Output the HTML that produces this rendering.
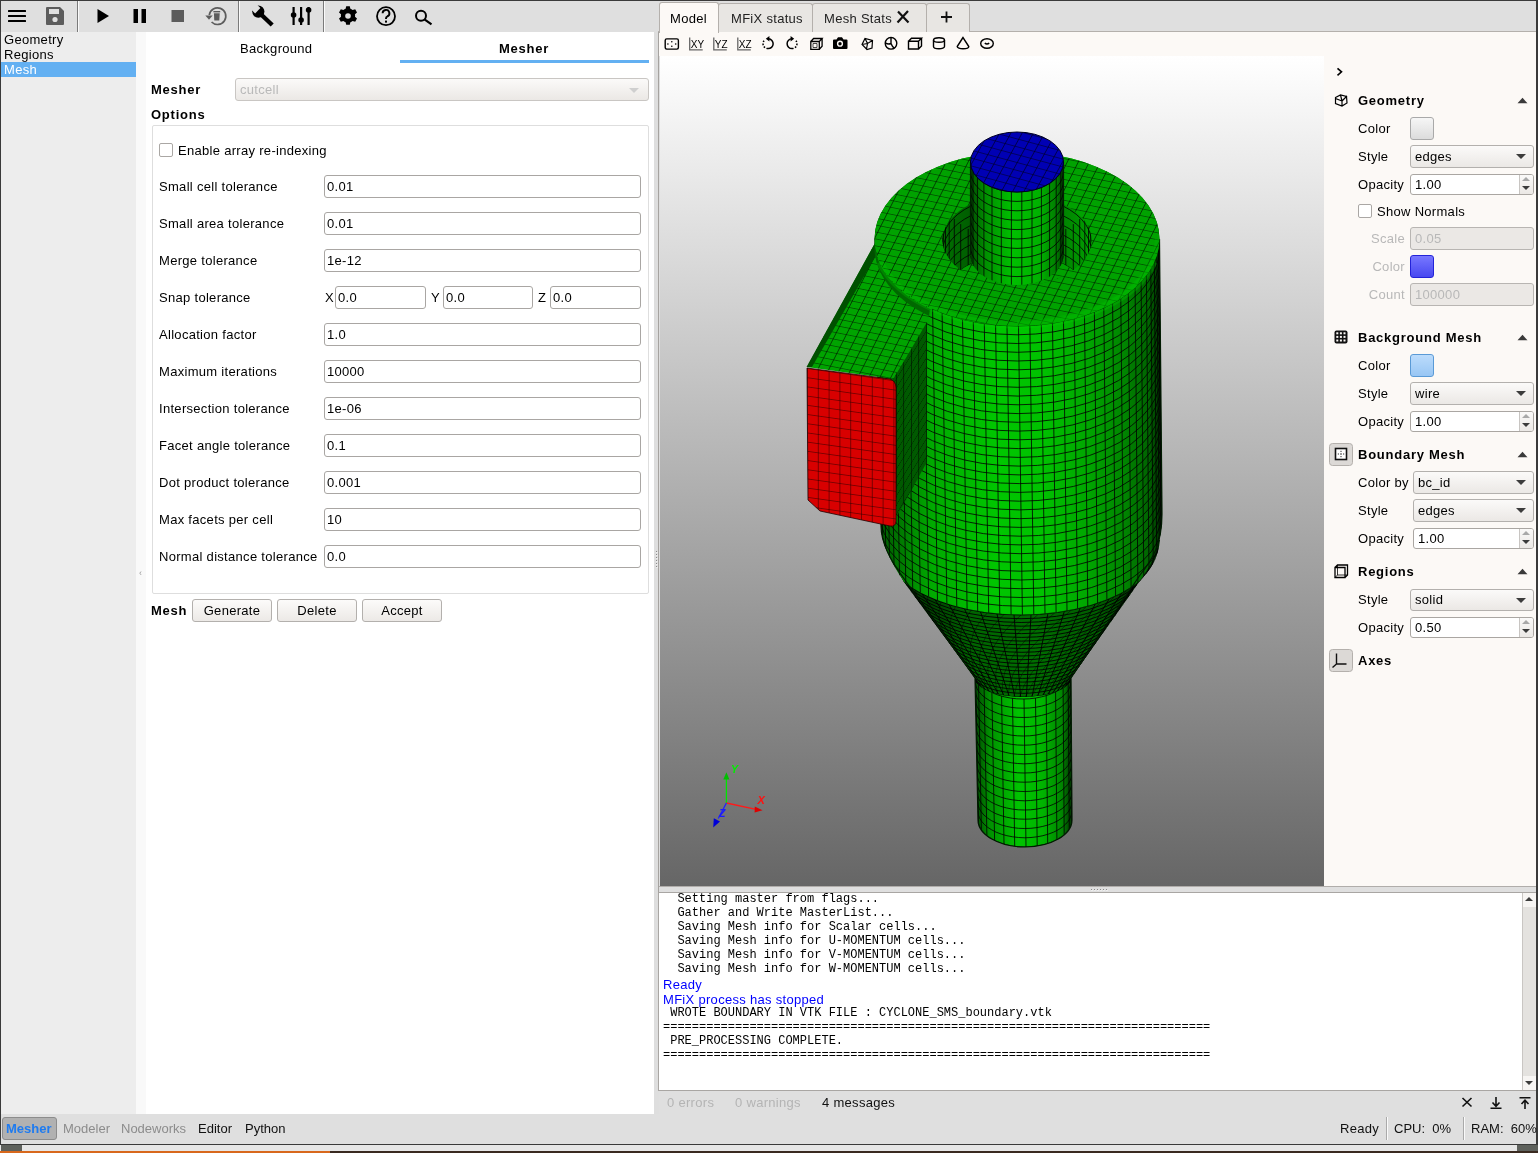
<!DOCTYPE html>
<html><head><meta charset="utf-8">
<style>
*{box-sizing:border-box;margin:0;padding:0}
html,body{width:1538px;height:1153px;overflow:hidden;background:#dedede;font-family:"Liberation Sans",sans-serif;font-size:13px;color:#000}
.a{position:absolute}
.t{position:absolute;white-space:nowrap;line-height:15px;letter-spacing:0.3px}
.t[style*="bold"],.t.b{letter-spacing:0.75px}
.ns{letter-spacing:0!important}
.b{font-weight:bold}
.inp{position:absolute;background:#fff;border:1px solid #a9a6a3;border-radius:3px}
.inp span{position:absolute;left:2px;top:3px;line-height:15px;white-space:nowrap;letter-spacing:0.3px}
.cmb{position:absolute;border:1px solid #b3b0ad;border-radius:3px;background:linear-gradient(#fbfaf9,#ebe8e5)}
.cmb span{position:absolute;left:8px;top:3px;line-height:15px;white-space:nowrap;letter-spacing:0.3px}
.cmb i{position:absolute;right:9px;top:9px;width:0;height:0;border-left:5px solid transparent;border-right:5px solid transparent;border-top:5px solid #3c3c3c}
.btn{position:absolute;border:1px solid #b3b0ad;border-radius:3px;background:linear-gradient(#fcfbfa,#ece9e6);text-align:center;line-height:22px;letter-spacing:0.3px}
.mono{font-family:"Liberation Mono",monospace;font-size:12px;line-height:14px;letter-spacing:0}
</style></head><body><div id="wrap" style="position:absolute;left:0;top:0;width:1538px;height:1153px;will-change:transform">
<!-- window border -->
<div class="a" style="left:0;top:0;width:1538px;height:1px;background:#3a3a3a"></div>
<div class="a" style="left:0;top:0;width:1px;height:1145px;background:#3a3a3a"></div>
<div class="a" style="left:1536px;top:0;width:2px;height:1145px;background:#3a3a3a"></div>
<div class="a" style="left:0;top:1144px;width:1538px;height:1px;background:#3a3a3a"></div>
<div class="a" style="left:0;top:1145px;width:1538px;height:6px;background:#e6e6e6"></div>
<div class="a" style="left:1px;top:1145px;width:21px;height:6px;background:#5e615c"></div>
<div class="a" style="left:1517px;top:1145px;width:21px;height:6px;background:#5e615c"></div>
<div class="a" style="left:0;top:1151px;width:1538px;height:2px;background:#3a2a20"></div>
<div class="a" style="left:0;top:1151px;width:330px;height:2px;background:#d8681c"></div>

<!-- LEFT TOOLBAR -->
<div class="a" style="left:1px;top:1px;width:657px;height:31px;background:#dfdfdf"></div>
<div class="a" style="left:77px;top:1px;width:1px;height:31px;background:#7a7a7a"></div>
<div class="a" style="left:78px;top:1px;width:1px;height:31px;background:#fafafa"></div>
<div class="a" style="left:238px;top:1px;width:1px;height:31px;background:#7a7a7a"></div>
<div class="a" style="left:239px;top:1px;width:1px;height:31px;background:#fafafa"></div>
<div class="a" style="left:323px;top:1px;width:1px;height:31px;background:#7a7a7a"></div>
<div class="a" style="left:324px;top:1px;width:1px;height:31px;background:#fafafa"></div>
<svg class="a" style="left:0;top:0" width="460" height="32" viewBox="0 0 460 32">
 <!-- hamburger -->
 <g fill="#000"><rect x="8" y="10" width="18" height="2" rx="0.5"/><rect x="8" y="15" width="18" height="2" rx="0.5"/><rect x="8" y="20" width="18" height="2" rx="0.5"/></g>
 <!-- save -->
 <path fill="#5c5c5c" d="M47 7h13l4 4v13a1 1 0 0 1-1 1H47a1 1 0 0 1-1-1V8a1 1 0 0 1 1-1z"/>
 <rect x="49" y="9" width="10" height="5" fill="#dfdfdf"/>
 <circle cx="55" cy="19.5" r="2.6" fill="#dfdfdf"/>
 <!-- play -->
 <path fill="#000" d="M97.5 9L109 16L97.5 23z"/>
 <!-- pause -->
 <rect x="133.5" y="9" width="4.5" height="14" fill="#000"/><rect x="141.5" y="9" width="4.5" height="14" fill="#000"/>
 <!-- stop -->
 <rect x="171.5" y="10" width="12.5" height="12" fill="#5c5c5c"/>
 <!-- reset/trash -->
 <path fill="none" stroke="#5c5c5c" stroke-width="1.7" d="M209.3 15A8.3 8.3 0 1 1 211.6 22"/>
 <path fill="#5c5c5c" d="M205.3 15.6h7.4l-3.7 4.2z"/>
 <rect x="213.4" y="11" width="6.8" height="1.4" fill="#5c5c5c"/>
 <path fill="#5c5c5c" d="M213.9 13.2h5.8l-0.4 7.3h-5z"/>
 <!-- wrench -->
 <circle cx="258.3" cy="11.6" r="6.1" fill="#000"/><path d="M259 12.5L272.2 25" stroke="#000" stroke-width="4.4"/><path d="M250.3 8.6L255.6 3.3L260.4 8.1L255.1 13.4z" fill="#dfdfdf"/>
 <!-- sliders -->
 <g fill="#000"><rect x="292.5" y="7" width="2.2" height="18"/><rect x="300" y="7" width="2.2" height="18"/><rect x="307.5" y="7" width="2.2" height="18"/>
 <circle cx="293.6" cy="15" r="2.8"/><circle cx="301.1" cy="20" r="2.8"/><circle cx="308.6" cy="10" r="2.8"/></g>
 <!-- gear -->
 <g transform="translate(348,16)"><path fill="#000" d="M-1.8-9.8h3.6l0.6 2.6a7 7 0 0 1 2.2 1.3l2.6-0.8 1.8 3.1-2 1.8a7 7 0 0 1 0 2.6l2 1.8-1.8 3.1-2.6-0.8a7 7 0 0 1-2.2 1.3l-0.6 2.6h-3.6l-0.6-2.6a7 7 0 0 1-2.2-1.3l-2.6 0.8-1.8-3.1 2-1.8a7 7 0 0 1 0-2.6l-2-1.8 1.8-3.1 2.6 0.8a7 7 0 0 1 2.2-1.3z"/><circle r="2.8" fill="#dfdfdf"/></g>
 <!-- help -->
 <circle cx="386" cy="16.2" r="9" fill="none" stroke="#000" stroke-width="1.8"/>
 <path fill="none" stroke="#000" stroke-width="1.9" d="M382.6 13.3a3.4 3.4 0 1 1 4.6 3.2c-0.9 0.4-1.2 1-1.2 2v0.6"/>
 <rect x="385" y="20.6" width="2" height="2" fill="#000"/>
 <!-- search -->
 <circle cx="421" cy="15.8" r="5" fill="none" stroke="#000" stroke-width="2"/>
 <path stroke="#000" stroke-width="2.2" d="M424.5 19.3L431.5 24.3"/>
</svg>


<!-- TREE -->
<div class="a" style="left:1px;top:32px;width:135px;height:1082px;background:#ededed"></div>
<div class="a" style="left:1px;top:62px;width:135px;height:15px;background:#63b0f2"></div>
<div class="t" style="left:4px;top:32px">Geometry</div>
<div class="t" style="left:4px;top:47px">Regions</div>
<div class="t" style="left:4px;top:62px;color:#fff">Mesh</div>
<div class="a" style="left:136px;top:32px;width:10px;height:1082px;background:#f9f9f9"></div>
<div class="a" style="left:146px;top:32px;width:508px;height:1082px;background:#fff"></div>
<div class="a" style="left:654px;top:32px;width:4px;height:1082px;background:#dedede"></div>

<div class="t" style="left:240px;top:41px">Background</div>
<div class="t b" style="left:499px;top:41px">Mesher</div>
<div class="a" style="left:400px;top:60px;width:249px;height:3px;background:#63b0f2"></div>
<div class="t b" style="left:151px;top:82px">Mesher</div>
<div class="cmb" style="left:235px;top:78px;width:414px;height:23px;border-color:#c9c6c3"><span style="left:4px;color:#b9b9b9">cutcell</span><i style="border-top-color:#cfcfcf"></i></div>
<div class="t b" style="left:151px;top:107px">Options</div>
<div class="a" style="left:152px;top:125px;width:497px;height:469px;border:1px solid #dedede;border-radius:2px"></div>
<div class="a" style="left:159px;top:143px;width:14px;height:14px;border:1px solid #aaa7a4;border-radius:2px;background:#fff"></div>
<div class="t" style="left:178px;top:143px">Enable array re-indexing</div>
<div class="t" style="left:159px;top:179px">Small cell tolerance</div>
<div class="inp" style="left:324px;top:175px;width:317px;height:23px"><span>0.01</span></div>
<div class="t" style="left:159px;top:216px">Small area tolerance</div>
<div class="inp" style="left:324px;top:212px;width:317px;height:23px"><span>0.01</span></div>
<div class="t" style="left:159px;top:253px">Merge tolerance</div>
<div class="inp" style="left:324px;top:249px;width:317px;height:23px"><span>1e-12</span></div>
<div class="t" style="left:159px;top:290px">Snap tolerance</div>
<div class="t" style="left:325px;top:290px">X</div>
<div class="inp" style="left:335px;top:286px;width:91px;height:23px"><span>0.0</span></div>
<div class="t" style="left:431px;top:290px">Y</div>
<div class="inp" style="left:443px;top:286px;width:90px;height:23px"><span>0.0</span></div>
<div class="t" style="left:538px;top:290px">Z</div>
<div class="inp" style="left:550px;top:286px;width:91px;height:23px"><span>0.0</span></div>
<div class="t" style="left:159px;top:327px">Allocation factor</div>
<div class="inp" style="left:324px;top:323px;width:317px;height:23px"><span>1.0</span></div>
<div class="t" style="left:159px;top:364px">Maximum iterations</div>
<div class="inp" style="left:324px;top:360px;width:317px;height:23px"><span>10000</span></div>
<div class="t" style="left:159px;top:401px">Intersection tolerance</div>
<div class="inp" style="left:324px;top:397px;width:317px;height:23px"><span>1e-06</span></div>
<div class="t" style="left:159px;top:438px">Facet angle tolerance</div>
<div class="inp" style="left:324px;top:434px;width:317px;height:23px"><span>0.1</span></div>
<div class="t" style="left:159px;top:475px">Dot product tolerance</div>
<div class="inp" style="left:324px;top:471px;width:317px;height:23px"><span>0.001</span></div>
<div class="t" style="left:159px;top:512px">Max facets per cell</div>
<div class="inp" style="left:324px;top:508px;width:317px;height:23px"><span>10</span></div>
<div class="t" style="left:159px;top:549px">Normal distance tolerance</div>
<div class="inp" style="left:324px;top:545px;width:317px;height:23px"><span>0.0</span></div>
<div class="t b" style="left:151px;top:603px">Mesh</div>
<div class="btn" style="left:192px;top:599px;width:80px;height:23px">Generate</div>
<div class="btn" style="left:277px;top:599px;width:80px;height:23px">Delete</div>
<div class="btn" style="left:362px;top:599px;width:80px;height:23px">Accept</div>
<div class="a" style="left:139px;top:569px;font-size:9px;color:#9a9a9a;line-height:9px">&#8249;</div>

<!-- tab bar -->
<div class="a" style="left:658px;top:1px;width:878px;height:31px;background:#dfdfdf"></div>
<div class="a" style="left:658px;top:31px;width:878px;height:1px;background:#b4b0ac"></div>
<div class="a" style="left:658px;top:32px;width:878px;height:24px;background:#fcf9f6"></div>
<div class="a" style="left:658px;top:32px;width:1px;height:1059px;background:#a6a3a0"></div>
<div class="a" style="left:718px;top:3px;width:95px;height:29px;background:#e8e6e3;border:1px solid #b4b0ac;border-bottom:none;border-radius:3px 3px 0 0"></div>
<div class="a" style="left:812px;top:3px;width:115px;height:29px;background:#e8e6e3;border:1px solid #b4b0ac;border-bottom:none;border-radius:3px 3px 0 0"></div>
<div class="a" style="left:926px;top:3px;width:44px;height:29px;background:#e8e6e3;border:1px solid #b4b0ac;border-bottom:none;border-radius:3px 3px 0 0"></div>
<div class="a" style="left:659px;top:2px;width:60px;height:31px;background:#fcf9f6;border:1px solid #b4b0ac;border-bottom:none;border-radius:3px 3px 0 0"></div>
<div class="t" style="left:670px;top:11px">Model</div>
<div class="t" style="left:731px;top:11px;color:#222">MFiX status</div>
<div class="t" style="left:824px;top:11px;color:#222">Mesh Stats</div>
<svg class="a" style="left:890px;top:8px" width="80" height="20" viewBox="890 8 80 20">
 <path d="M898 11.5L908.5 22.5M908 11L897.5 22.5" stroke="#111" stroke-width="2.2" fill="none"/>
 <path d="M941 17h11M946.5 11.5v11" stroke="#111" stroke-width="1.8"/>
</svg>
<!-- 3D toolbar icons -->
<svg class="a" style="left:658px;top:32px" width="350" height="24" viewBox="658 32 350 24">
 <g fill="none" stroke="#000" stroke-width="1.4">
  <rect x="665.2" y="38.9" width="13.2" height="10.2" rx="1.5"/>
 </g>
 <g fill="#000"><circle cx="671.8" cy="41.8" r="0.8"/><circle cx="671.8" cy="46.3" r="0.8"/><circle cx="667.9" cy="44" r="0.8"/><circle cx="675.7" cy="44" r="0.8"/></g>
 <g fill="none" stroke="#666" stroke-width="1.3"><path d="M689.7 37.5v12.3h13"/><path d="M713.8 37.5v12.3h13"/><path d="M737.8 37.5v12.3h13"/></g>
 <g font-family="Liberation Sans" font-size="10" fill="#000"><text x="690.8" y="47.6">XY</text><text x="714.8" y="47.6">YZ</text><text x="738.8" y="47.6">XZ</text></g>
 <g fill="none" stroke="#000" stroke-width="1.5"><path d="M768.5 38.8A4.9 4.9 0 0 1 768 48.6"/><path d="M792 38.8A4.9 4.9 0 0 0 792 48.6"/></g>
 <g fill="none" stroke="#000" stroke-width="1.5" stroke-dasharray="1.6 1.5"><path d="M768 48.6A4.9 4.9 0 0 1 764.2 40.5"/><path d="M792 48.6A4.9 4.9 0 0 0 795.8 40.5"/></g>
 <path d="M765.8 38.8l3.6-2.8v5.6z M794.2 38.8l-3.6-2.8v5.6z" fill="#000"/>
 <g fill="none" stroke="#000" stroke-width="1.3"><path d="M810.8 41.5h8.5v7.8h-8.5z M810.8 41.5l2.8-3h8.5l-2.8 3 M822.1 38.5v7.8l-2.8 3"/><path d="M813 43.5h4v4h-4z" stroke-width="0.7"/></g>
 <path d="M836.5 39.5l1.5-2.2h4l1.5 2.2h3a1 1 0 0 1 1 1v7.5a1 1 0 0 1-1 1h-12.5a1 1 0 0 1-1-1V40.5a1 1 0 0 1 1-1z" fill="#000"/>
 <circle cx="840" cy="43.7" r="2.4" fill="none" stroke="#fcf9f6" stroke-width="1.4"/>
 <g fill="none" stroke="#000" stroke-width="1.2"><path d="M862 44.5l3-6 7.5 2-0.5 7.5-5 1.5z M865 38.5l2.5 5 5-3 M867.5 43.5l-1 5.5 M862 44.5l5.5-1"/></g>
 <g fill="none" stroke="#000" stroke-width="1.4"><circle cx="891" cy="43.3" r="5.8"/><path d="M891 37.5V43.5 M885.3 42.8Q888.3 44.8 891 43.5Q892.2 46.8 894.5 48.3"/></g>
 <g fill="none" stroke="#000" stroke-width="1.4"><path d="M908.5 41.2h10v7.8h-10z M908.5 41.2l3-3h10l-3 3 M921.5 38.2v7.8l-3 3"/></g>
 <g fill="none" stroke="#000" stroke-width="1.4"><ellipse cx="939" cy="40" rx="5.5" ry="2.3"/><path d="M933.5 40v6.5a5.5 2.3 0 0 0 11 0V40"/></g>
 <g fill="none" stroke="#000" stroke-width="1.4"><path d="M963 37.5l-5.8 9a5.8 2.2 0 0 0 11.6 0z"/></g>
 <g fill="none" stroke="#000" stroke-width="1.4"><ellipse cx="987" cy="43.5" rx="6.3" ry="4.8"/><path d="M984.8 43.2q2.2 1.6 4.4 0" stroke-width="1.6"/></g>
</svg>

<!--VIEW--><svg class="a" style="left:660px;top:56px" width="664" height="830" viewBox="660 56 664 830">
<defs>
<linearGradient id="bg" x1="0" y1="0" x2="0" y2="1"><stop offset="0" stop-color="#ffffff"/><stop offset="1" stop-color="#666666"/></linearGradient>
<linearGradient id="gBody" gradientUnits="userSpaceOnUse" x1="874" y1="0" x2="1163" y2="0">
 <stop offset="0" stop-color="#005000"/><stop offset="0.08" stop-color="#007400"/><stop offset="0.2" stop-color="#00aa00"/><stop offset="0.42" stop-color="#00c600"/><stop offset="0.58" stop-color="#00c200"/><stop offset="0.74" stop-color="#00a600"/><stop offset="0.87" stop-color="#008400"/><stop offset="0.95" stop-color="#006400"/><stop offset="1" stop-color="#002a00"/></linearGradient>
<linearGradient id="gTube" gradientUnits="userSpaceOnUse" x1="975" y1="0" x2="1072" y2="0">
 <stop offset="0" stop-color="#004800"/><stop offset="0.15" stop-color="#009000"/><stop offset="0.45" stop-color="#00c400"/><stop offset="0.7" stop-color="#00b400"/><stop offset="0.9" stop-color="#008400"/><stop offset="1" stop-color="#003000"/></linearGradient>
<linearGradient id="gOut" gradientUnits="userSpaceOnUse" x1="970" y1="0" x2="1064" y2="0">
 <stop offset="0" stop-color="#004a00"/><stop offset="0.15" stop-color="#008c00"/><stop offset="0.45" stop-color="#00c000"/><stop offset="0.75" stop-color="#00b000"/><stop offset="0.92" stop-color="#007c00"/><stop offset="1" stop-color="#003800"/></linearGradient>
<linearGradient id="gCone" gradientUnits="userSpaceOnUse" x1="900" y1="0" x2="1145" y2="0">
 <stop offset="0" stop-color="#002c00"/><stop offset="0.3" stop-color="#006400"/><stop offset="0.55" stop-color="#006e00"/><stop offset="0.85" stop-color="#005800"/><stop offset="1" stop-color="#002400"/></linearGradient>
<linearGradient id="gHole" gradientUnits="userSpaceOnUse" x1="942" y1="0" x2="1092" y2="0">
 <stop offset="0" stop-color="#007000"/><stop offset="0.2" stop-color="#005c00"/><stop offset="0.75" stop-color="#007c00"/><stop offset="1" stop-color="#00a000"/></linearGradient>
<pattern id="pTop" patternUnits="userSpaceOnUse" width="10.5" height="10.5" patternTransform="translate(1017 239) scale(1 0.63) rotate(17.6)">
 <path d="M0 0H10.5M0 0V10.5" stroke="#000" stroke-width="1.25" stroke-opacity="0.9" fill="none"/></pattern>
<pattern id="pBlue" patternUnits="userSpaceOnUse" width="10.5" height="10.5" patternTransform="translate(1017 162) scale(1 0.7) rotate(21)">
 <path d="M0 0H10.5M0 0V10.5" stroke="#000" stroke-width="1.2" stroke-opacity="0.9" fill="none"/></pattern>
<pattern id="pRed" patternUnits="userSpaceOnUse" width="10.8" height="9.2" patternTransform="translate(807 368) skewY(8)">
 <path d="M0 0H10.8M0 0V9.2" stroke="#000" stroke-width="1" stroke-opacity="0.85" fill="none"/></pattern>
<pattern id="pInTop" patternUnits="userSpaceOnUse" width="10.5" height="10.5" patternTransform="translate(807 368) scale(1 0.63) rotate(17.6)">
 <path d="M0 0H10.5M0 0V10.5" stroke="#000" stroke-width="1.25" stroke-opacity="0.9" fill="none"/></pattern>
<pattern id="pInR" patternUnits="userSpaceOnUse" width="7.5" height="9" patternTransform="translate(896 388) skewY(-58)">
 <path d="M0 0H7.5M0 0V9" stroke="#000" stroke-width="1.1" stroke-opacity="0.9" fill="none"/></pattern>
</defs>
<rect x="660" y="56" width="664" height="830" fill="url(#bg)"/>
<path d="M975 670 L1071 670 L1072 820 A47 27 0 0 1 978 820 Z" fill="url(#gTube)"/>
<clipPath id="cTube"><path d="M975 670 L1071 670 L1072 820 A47 27 0 0 1 978 820 Z"/></clipPath>
<g clip-path="url(#cTube)"><path d="M1071.0 672.0 L1070.6 675.5 L1069.4 679.0 L1067.3 682.3 L1064.6 685.5 L1061.1 688.4 L1056.9 691.1 L1052.2 693.4 L1047.0 695.4 L1041.4 696.9 L1035.4 698.1 L1029.3 698.8 L1023.0 699.0 L1016.7 698.8 L1010.6 698.1 L1004.6 696.9 L999.0 695.4 L993.8 693.4 L989.1 691.1 L984.9 688.4 L981.4 685.5 L978.7 682.3 L976.6 679.0 L975.4 675.5 L975.0 672.0 M1071.1 681.2 L1070.7 684.8 L1069.4 688.2 L1067.4 691.6 L1064.6 694.8 L1061.2 697.7 L1057.0 700.3 L1052.3 702.7 L1047.1 704.6 L1041.5 706.2 L1035.5 707.3 L1029.4 708.0 L1023.1 708.2 L1016.9 708.0 L1010.7 707.3 L1004.8 706.2 L999.2 704.6 L993.9 702.7 L989.2 700.3 L985.1 697.7 L981.6 694.8 L978.8 691.6 L976.8 688.2 L975.6 684.8 L975.2 681.2 M1071.1 690.5 L1070.7 694.0 L1069.5 697.5 L1067.5 700.8 L1064.7 704.0 L1061.2 706.9 L1057.1 709.6 L1052.4 711.9 L1047.2 713.9 L1041.6 715.4 L1035.6 716.6 L1029.5 717.3 L1023.2 717.5 L1017.0 717.3 L1010.9 716.6 L1004.9 715.4 L999.3 713.9 L994.1 711.9 L989.4 709.6 L985.3 706.9 L981.8 704.0 L979.0 700.8 L977.0 697.5 L975.8 694.0 L975.4 690.5 M1071.2 699.8 L1070.8 703.3 L1069.6 706.7 L1067.5 710.1 L1064.8 713.2 L1061.3 716.2 L1057.2 718.8 L1052.5 721.2 L1047.3 723.1 L1041.7 724.7 L1035.7 725.8 L1029.6 726.5 L1023.4 726.8 L1017.1 726.5 L1011.0 725.8 L1005.1 724.7 L999.5 723.1 L994.3 721.2 L989.6 718.8 L985.4 716.2 L982.0 713.2 L979.2 710.1 L977.2 706.7 L976.0 703.3 L975.6 699.8 M1071.2 709.0 L1070.8 712.5 L1069.6 716.0 L1067.6 719.3 L1064.9 722.5 L1061.4 725.4 L1057.3 728.1 L1052.6 730.4 L1047.4 732.4 L1041.8 733.9 L1035.9 735.1 L1029.7 735.8 L1023.5 736.0 L1017.3 735.8 L1011.1 735.1 L1005.2 733.9 L999.6 732.4 L994.4 730.4 L989.7 728.1 L985.6 725.4 L982.1 722.5 L979.4 719.3 L977.4 716.0 L976.2 712.5 L975.8 709.0 M1071.3 718.2 L1070.9 721.8 L1069.7 725.2 L1067.7 728.6 L1064.9 731.8 L1061.5 734.7 L1057.3 737.3 L1052.7 739.7 L1047.5 741.6 L1041.9 743.2 L1036.0 744.3 L1029.8 745.0 L1023.6 745.2 L1017.4 745.0 L1011.3 744.3 L1005.4 743.2 L999.8 741.6 L994.6 739.7 L989.9 737.3 L985.8 734.7 L982.3 731.8 L979.6 728.6 L977.6 725.2 L976.3 721.8 L975.9 718.2 M1071.4 727.5 L1071.0 731.0 L1069.8 734.5 L1067.7 737.8 L1065.0 741.0 L1061.5 743.9 L1057.4 746.6 L1052.7 748.9 L1047.6 750.9 L1042.0 752.4 L1036.1 753.6 L1030.0 754.3 L1023.8 754.5 L1017.5 754.3 L1011.4 753.6 L1005.5 752.4 L999.9 750.9 L994.8 748.9 L990.1 746.6 L986.0 743.9 L982.5 741.0 L979.8 737.8 L977.7 734.5 L976.5 731.0 L976.1 727.5 M1071.4 736.8 L1071.0 740.3 L1069.8 743.7 L1067.8 747.1 L1065.1 750.2 L1061.6 753.2 L1057.5 755.8 L1052.8 758.2 L1047.7 760.1 L1042.1 761.7 L1036.2 762.8 L1030.1 763.5 L1023.9 763.8 L1017.7 763.5 L1011.6 762.8 L1005.7 761.7 L1000.1 760.1 L994.9 758.2 L990.2 755.8 L986.1 753.2 L982.7 750.2 L979.9 747.1 L977.9 743.7 L976.7 740.3 L976.3 736.8 M1071.5 746.0 L1071.1 749.5 L1069.9 753.0 L1067.9 756.3 L1065.1 759.5 L1061.7 762.4 L1057.6 765.1 L1052.9 767.4 L1047.8 769.4 L1042.2 770.9 L1036.3 772.1 L1030.2 772.8 L1024.0 773.0 L1017.8 772.8 L1011.7 772.1 L1005.8 770.9 L1000.2 769.4 L995.1 767.4 L990.4 765.1 L986.3 762.4 L982.9 759.5 L980.1 756.3 L978.1 753.0 L976.9 749.5 L976.5 746.0 M1071.6 755.2 L1071.2 758.8 L1069.9 762.2 L1068.0 765.6 L1065.2 768.8 L1061.8 771.7 L1057.7 774.3 L1053.0 776.7 L1047.8 778.6 L1042.3 780.2 L1036.4 781.3 L1030.3 782.0 L1024.1 782.2 L1017.9 782.0 L1011.8 781.3 L1006.0 780.2 L1000.4 778.6 L995.2 776.7 L990.6 774.3 L986.5 771.7 L983.0 768.8 L980.3 765.6 L978.3 762.2 L977.1 758.8 L976.7 755.2 M1071.6 764.5 L1071.2 768.0 L1070.0 771.5 L1068.0 774.8 L1065.3 778.0 L1061.8 780.9 L1057.7 783.6 L1053.1 785.9 L1047.9 787.9 L1042.4 789.4 L1036.5 790.6 L1030.4 791.3 L1024.2 791.5 L1018.1 791.3 L1012.0 790.6 L1006.1 789.4 L1000.6 787.9 L995.4 785.9 L990.8 783.6 L986.7 780.9 L983.2 778.0 L980.5 774.8 L978.5 771.5 L977.3 768.0 L976.9 764.5 M1071.7 773.8 L1071.3 777.3 L1070.1 780.7 L1068.1 784.1 L1065.3 787.2 L1061.9 790.2 L1057.8 792.8 L1053.2 795.2 L1048.0 797.1 L1042.5 798.7 L1036.6 799.8 L1030.6 800.5 L1024.4 800.8 L1018.2 800.5 L1012.1 799.8 L1006.3 798.7 L1000.7 797.1 L995.6 795.2 L990.9 792.8 L986.8 790.2 L983.4 787.2 L980.7 784.1 L978.7 780.7 L977.5 777.3 L977.1 773.8 M1071.8 783.0 L1071.3 786.5 L1070.1 790.0 L1068.2 793.3 L1065.4 796.5 L1062.0 799.4 L1057.9 802.1 L1053.3 804.4 L1048.1 806.4 L1042.6 807.9 L1036.7 809.1 L1030.7 809.8 L1024.5 810.0 L1018.3 809.8 L1012.3 809.1 L1006.4 807.9 L1000.9 806.4 L995.7 804.4 L991.1 802.1 L987.0 799.4 L983.6 796.5 L980.8 793.3 L978.9 790.0 L977.7 786.5 L977.2 783.0 M1071.8 792.2 L1071.4 795.8 L1070.2 799.2 L1068.2 802.6 L1065.5 805.8 L1062.1 808.7 L1058.0 811.3 L1053.4 813.7 L1048.2 815.6 L1042.7 817.2 L1036.8 818.3 L1030.8 819.0 L1024.6 819.2 L1018.5 819.0 L1012.4 818.3 L1006.6 817.2 L1001.0 815.6 L995.9 813.7 L991.3 811.3 L987.2 808.7 L983.8 805.8 L981.0 802.6 L979.0 799.2 L977.8 795.8 L977.4 792.2 M1071.9 801.5 L1071.5 805.0 L1070.3 808.5 L1068.3 811.8 L1065.6 815.0 L1062.1 817.9 L1058.1 820.6 L1053.4 822.9 L1048.3 824.9 L1042.8 826.4 L1036.9 827.6 L1030.9 828.3 L1024.8 828.5 L1018.6 828.3 L1012.6 827.6 L1006.7 826.4 L1001.2 824.9 L996.1 822.9 L991.4 820.6 L987.4 817.9 L983.9 815.0 L981.2 811.8 L979.2 808.5 L978.0 805.0 L977.6 801.5 M1071.9 810.8 L1071.5 814.3 L1070.3 817.7 L1068.4 821.1 L1065.6 824.2 L1062.2 827.2 L1058.2 829.8 L1053.5 832.2 L1048.4 834.1 L1042.9 835.7 L1037.1 836.8 L1031.0 837.5 L1024.9 837.8 L1018.7 837.5 L1012.7 836.8 L1006.9 835.7 L1001.3 834.1 L996.2 832.2 L991.6 829.8 L987.5 827.2 L984.1 824.2 L981.4 821.1 L979.4 817.7 L978.2 814.3 L977.8 810.8 M1072.0 820.0 L1071.6 823.5 L1070.4 827.0 L1068.4 830.3 L1065.7 833.5 L1062.3 836.4 L1058.2 839.1 L1053.6 841.4 L1048.5 843.4 L1043.0 844.9 L1037.2 846.1 L1031.1 846.8 L1025.0 847.0 L1018.9 846.8 L1012.8 846.1 L1007.0 844.9 L1001.5 843.4 L996.4 841.4 L991.8 839.1 L987.7 836.4 L984.3 833.5 L981.6 830.3 L979.6 827.0 L978.4 823.5 L978.0 820.0 M1070.8 674.7 L1071.8 822.7 M1068.2 681.0 L1069.3 829.0 M1063.1 686.9 L1064.2 834.9 M1055.6 691.8 L1056.9 839.8 M1046.2 695.6 L1047.7 843.6 M1035.5 698.1 L1037.2 846.1 M1024.0 699.0 L1026.0 847.0 M1012.5 698.3 L1014.7 846.3 M1001.6 696.2 L1004.0 844.2 M991.9 692.6 L994.6 840.6 M984.1 687.8 L986.9 835.8 M978.5 682.1 L981.4 830.1 M975.5 675.8 L978.5 823.8" stroke="#000" stroke-width="1.0" stroke-opacity="0.8" fill="none"/></g>
<path d="M884 545 L1160 540 C1158 560 1150 570 1139 582 L1071 678 A48 19 0 0 1 975 678 L904 582 Z" fill="url(#gCone)"/>
<clipPath id="cCone"><path d="M884 545 L1160 540 C1158 560 1150 570 1139 582 L1071 678 A48 19 0 0 1 975 678 L904 582 Z"/></clipPath>
<g clip-path="url(#cCone)"><path d="M1162.0 542.0 L1160.8 551.5 L1157.2 560.9 L1151.3 569.9 L1143.1 578.5 L1132.9 586.4 L1120.7 593.6 L1106.8 599.9 L1091.5 605.2 L1075.0 609.4 L1057.5 612.5 L1039.4 614.4 L1021.0 615.0 L1002.6 614.4 L984.5 612.5 L967.0 609.4 L950.5 605.2 L935.2 599.9 L921.3 593.6 L909.1 586.4 L898.9 578.5 L890.7 569.9 L884.8 560.9 L881.2 551.5 L880.0 542.0 M1157.9 548.2 L1156.7 557.4 L1153.2 566.4 L1147.5 575.2 L1139.5 583.5 L1129.6 591.1 L1117.8 598.1 L1104.4 604.1 L1089.5 609.3 L1073.4 613.4 L1056.5 616.3 L1038.9 618.1 L1021.1 618.7 L1003.2 618.1 L985.7 616.3 L968.8 613.4 L952.7 609.3 L937.8 604.1 L924.4 598.1 L912.6 591.1 L902.6 583.5 L894.7 575.2 L889.0 566.4 L885.5 557.4 L884.3 548.2 M1153.7 554.4 L1152.6 563.3 L1149.2 572.0 L1143.6 580.4 L1136.0 588.4 L1126.3 595.8 L1114.9 602.5 L1101.9 608.4 L1087.5 613.3 L1071.9 617.3 L1055.5 620.1 L1038.5 621.9 L1021.2 622.5 L1003.9 621.9 L986.9 620.1 L970.5 617.3 L954.9 613.3 L940.5 608.4 L927.5 602.5 L916.0 595.8 L906.4 588.4 L898.7 580.4 L893.2 572.0 L889.8 563.3 L888.6 554.4 M1149.6 560.5 L1148.5 569.1 L1145.2 577.5 L1139.8 585.7 L1132.4 593.4 L1123.1 600.5 L1112.0 607.0 L1099.4 612.6 L1085.4 617.4 L1070.4 621.2 L1054.5 623.9 L1038.0 625.6 L1021.3 626.2 L1004.5 625.6 L988.1 623.9 L972.2 621.2 L957.1 617.4 L943.2 612.6 L930.5 607.0 L919.5 600.5 L910.1 593.4 L902.7 585.7 L897.3 577.5 L894.1 569.1 L893.0 560.5 M1145.5 566.7 L1144.4 575.0 L1141.2 583.1 L1136.0 590.9 L1128.8 598.3 L1119.8 605.2 L1109.1 611.4 L1096.9 616.9 L1083.4 621.4 L1068.9 625.1 L1053.5 627.8 L1037.6 629.4 L1021.4 629.9 L1005.2 629.4 L989.2 627.8 L973.9 625.1 L959.3 621.4 L945.8 616.9 L933.6 611.4 L922.9 605.2 L913.9 598.3 L906.7 590.9 L901.5 583.1 L898.3 575.0 L897.3 566.7 M1141.3 572.9 L1140.3 580.8 L1137.2 588.6 L1132.2 596.1 L1125.3 603.3 L1116.5 609.9 L1106.2 615.8 L1094.4 621.1 L1081.4 625.5 L1067.3 629.0 L1052.5 631.6 L1037.1 633.1 L1021.5 633.6 L1005.8 633.1 L990.4 631.6 L975.6 629.0 L961.5 625.5 L948.5 621.1 L936.7 615.8 L926.4 609.9 L917.6 603.3 L910.7 596.1 L905.7 588.6 L902.6 580.8 L901.6 572.9 M1137.2 579.1 L1136.2 586.7 L1133.2 594.2 L1128.4 601.4 L1121.7 608.2 L1113.3 614.6 L1103.3 620.3 L1091.9 625.3 L1079.4 629.6 L1065.8 632.9 L1051.5 635.4 L1036.6 636.9 L1021.5 637.4 L1006.5 636.9 L991.6 635.4 L977.3 632.9 L963.7 629.6 L951.2 625.3 L939.8 620.3 L929.8 614.6 L921.4 608.2 L914.7 601.4 L909.8 594.2 L906.9 586.7 L905.9 579.1 M1133.0 585.3 L1132.1 592.6 L1129.2 599.7 L1124.6 606.6 L1118.1 613.2 L1110.0 619.3 L1100.4 624.7 L1089.5 629.6 L1077.3 633.6 L1064.3 636.8 L1050.5 639.2 L1036.2 640.6 L1021.6 641.1 L1007.1 640.6 L992.8 639.2 L979.0 636.8 L965.9 633.6 L953.8 629.6 L942.9 624.7 L933.2 619.3 L925.2 613.2 L918.7 606.6 L914.0 599.7 L911.2 592.6 L910.2 585.3 M1128.9 591.5 L1128.0 598.4 L1125.3 605.3 L1120.8 611.9 L1114.5 618.1 L1106.8 623.9 L1097.5 629.2 L1087.0 633.8 L1075.3 637.7 L1062.7 640.8 L1049.5 643.0 L1035.7 644.4 L1021.7 644.8 L1007.7 644.4 L994.0 643.0 L980.7 640.8 L968.1 637.7 L956.5 633.8 L945.9 629.2 L936.7 623.9 L928.9 618.1 L922.7 611.9 L918.2 605.3 L915.5 598.4 L914.5 591.5 M1124.8 597.6 L1123.9 604.3 L1121.3 610.8 L1116.9 617.1 L1111.0 623.1 L1103.5 628.6 L1094.6 633.6 L1084.5 638.0 L1073.3 641.7 L1061.2 644.7 L1048.5 646.8 L1035.3 648.1 L1021.8 648.5 L1008.4 648.1 L995.2 646.8 L982.4 644.7 L970.3 641.7 L959.1 638.0 L949.0 633.6 L940.1 628.6 L932.7 623.1 L926.7 617.1 L922.4 610.8 L919.7 604.3 L918.9 597.6 M1120.6 603.8 L1119.8 610.1 L1117.3 616.4 L1113.1 622.4 L1107.4 628.0 L1100.2 633.3 L1091.7 638.1 L1082.0 642.3 L1071.3 645.8 L1059.7 648.6 L1047.5 650.6 L1034.8 651.9 L1021.9 652.3 L1009.0 651.9 L996.4 650.6 L984.1 648.6 L972.5 645.8 L961.8 642.3 L952.1 638.1 L943.6 633.3 L936.4 628.0 L930.7 622.4 L926.5 616.4 L924.0 610.1 L923.2 603.8 M1116.5 610.0 L1115.7 616.0 L1113.3 621.9 L1109.3 627.6 L1103.8 633.0 L1097.0 638.0 L1088.8 642.5 L1079.5 646.5 L1069.2 649.8 L1058.2 652.5 L1046.5 654.4 L1034.3 655.6 L1022.0 656.0 L1009.7 655.6 L997.5 654.4 L985.8 652.5 L974.8 649.8 L964.5 646.5 L955.2 642.5 L947.0 638.0 L940.2 633.0 L934.7 627.6 L930.7 621.9 L928.3 616.0 L927.5 610.0 M1112.4 616.2 L1111.6 621.9 L1109.3 627.5 L1105.5 632.8 L1100.3 638.0 L1093.7 642.7 L1085.9 647.0 L1077.0 650.7 L1067.2 653.9 L1056.6 656.4 L1045.5 658.2 L1033.9 659.4 L1022.1 659.7 L1010.3 659.4 L998.7 658.2 L987.5 656.4 L977.0 653.9 L967.1 650.7 L958.3 647.0 L950.5 642.7 L943.9 638.0 L938.7 632.8 L934.9 627.5 L932.6 621.9 L931.8 616.2 M1108.2 622.4 L1107.5 627.7 L1105.3 633.0 L1101.7 638.1 L1096.7 642.9 L1090.4 647.4 L1083.0 651.4 L1074.6 655.0 L1065.2 657.9 L1055.1 660.3 L1044.5 662.1 L1033.4 663.1 L1022.2 663.5 L1011.0 663.1 L999.9 662.1 L989.3 660.3 L979.2 657.9 L969.8 655.0 L961.3 651.4 L953.9 647.4 L947.7 642.9 L942.7 638.1 L939.1 633.0 L936.9 627.7 L936.1 622.4 M1104.1 628.5 L1103.4 633.6 L1101.3 638.5 L1097.9 643.3 L1093.1 647.9 L1087.2 652.1 L1080.1 655.9 L1072.1 659.2 L1063.2 662.0 L1053.6 664.2 L1043.4 665.9 L1033.0 666.9 L1022.3 667.2 L1011.6 666.9 L1001.1 665.9 L991.0 664.2 L981.4 662.0 L972.5 659.2 L964.4 655.9 L957.4 652.1 L951.4 647.9 L946.7 643.3 L943.2 638.5 L941.2 633.6 L940.5 628.5 M1100.0 634.7 L1099.3 639.4 L1097.3 644.1 L1094.0 648.6 L1089.6 652.8 L1083.9 656.8 L1077.2 660.3 L1069.6 663.4 L1061.2 666.1 L1052.1 668.2 L1042.4 669.7 L1032.5 670.6 L1022.4 670.9 L1012.2 670.6 L1002.3 669.7 L992.7 668.2 L983.6 666.1 L975.1 663.4 L967.5 660.3 L960.8 656.8 L955.2 652.8 L950.7 648.6 L947.4 644.1 L945.4 639.4 L944.8 634.7 M1095.8 640.9 L1095.2 645.3 L1093.3 649.6 L1090.2 653.8 L1086.0 657.8 L1080.7 661.4 L1074.3 664.8 L1067.1 667.7 L1059.1 670.1 L1050.5 672.1 L1041.4 673.5 L1032.0 674.3 L1022.5 674.6 L1012.9 674.3 L1003.5 673.5 L994.4 672.1 L985.8 670.1 L977.8 667.7 L970.6 664.8 L964.3 661.4 L958.9 657.8 L954.7 653.8 L951.6 649.6 L949.7 645.3 L949.1 640.9 M1091.7 647.1 L1091.1 651.2 L1089.3 655.2 L1086.4 659.1 L1082.4 662.7 L1077.4 666.1 L1071.4 669.2 L1064.6 671.9 L1057.1 674.2 L1049.0 676.0 L1040.4 677.3 L1031.6 678.1 L1022.5 678.4 L1013.5 678.1 L1004.7 677.3 L996.1 676.0 L988.0 674.2 L980.5 671.9 L973.7 669.2 L967.7 666.1 L962.7 662.7 L958.7 659.1 L955.8 655.2 L954.0 651.2 L953.4 647.1 M1087.5 653.3 L1087.0 657.0 L1085.3 660.7 L1082.6 664.3 L1078.8 667.7 L1074.1 670.8 L1068.5 673.7 L1062.2 676.1 L1055.1 678.2 L1047.5 679.9 L1039.4 681.1 L1031.1 681.8 L1022.6 682.1 L1014.2 681.8 L1005.8 681.1 L997.8 679.9 L990.2 678.2 L983.1 676.1 L976.7 673.7 L971.1 670.8 L966.4 667.7 L962.7 664.3 L959.9 660.7 L958.3 657.0 L957.7 653.3 M1083.4 659.5 L1082.9 662.9 L1081.3 666.3 L1078.8 669.5 L1075.3 672.6 L1070.9 675.5 L1065.6 678.1 L1059.7 680.4 L1053.1 682.3 L1045.9 683.8 L1038.4 684.9 L1030.6 685.6 L1022.7 685.8 L1014.8 685.6 L1007.0 684.9 L999.5 683.8 L992.4 682.3 L985.8 680.4 L979.8 678.1 L974.6 675.5 L970.2 672.6 L966.7 669.5 L964.1 666.3 L962.6 662.9 L962.0 659.5 M1079.3 665.6 L1078.8 668.8 L1077.3 671.8 L1075.0 674.8 L1071.7 677.6 L1067.6 680.2 L1062.7 682.5 L1057.2 684.6 L1051.0 686.3 L1044.4 687.7 L1037.4 688.7 L1030.2 689.3 L1022.8 689.5 L1015.4 689.3 L1008.2 688.7 L1001.2 687.7 L994.6 686.3 L988.5 684.6 L982.9 682.5 L978.0 680.2 L973.9 677.6 L970.7 674.8 L968.3 671.8 L966.8 668.8 L966.4 665.6 M1075.1 671.8 L1074.7 674.6 L1073.4 677.4 L1071.2 680.0 L1068.1 682.5 L1064.3 684.9 L1059.8 687.0 L1054.7 688.8 L1049.0 690.4 L1042.9 691.6 L1036.4 692.5 L1029.7 693.1 L1022.9 693.3 L1016.1 693.1 L1009.4 692.5 L1002.9 691.6 L996.8 690.4 L991.1 688.8 L986.0 687.0 L981.5 684.9 L977.7 682.5 L974.7 680.0 L972.5 677.4 L971.1 674.6 L970.7 671.8 M1071.0 678.0 L1070.6 680.5 L1069.4 682.9 L1067.3 685.3 L1064.6 687.5 L1061.1 689.6 L1056.9 691.4 L1052.2 693.1 L1047.0 694.5 L1041.4 695.6 L1035.4 696.4 L1029.3 696.8 L1023.0 697.0 L1016.7 696.8 L1010.6 696.4 L1004.6 695.6 L999.0 694.5 L993.8 693.1 L989.1 691.4 L984.9 689.6 L981.4 687.5 L978.7 685.3 L976.6 682.9 L975.4 680.5 L975.0 678.0 M1161.8 545.6 L1070.9 678.9 M1159.9 554.4 L1070.3 681.2 M1156.0 563.0 L1069.0 683.5 M1150.2 571.3 L1067.0 685.6 M1142.4 579.1 L1064.3 687.7 M1132.9 586.4 L1061.1 689.6 M1121.7 593.1 L1057.3 691.3 M1109.1 599.0 L1053.0 692.8 M1095.2 604.1 L1048.3 694.2 M1080.2 608.3 L1043.2 695.2 M1064.3 611.5 L1037.8 696.1 M1047.9 613.7 L1032.1 696.7 M1031.0 614.8 L1026.4 697.0 M1014.0 614.9 L1020.6 697.0 M997.0 613.9 L1014.8 696.7 M980.5 611.9 L1009.2 696.2 M964.5 608.9 L1003.8 695.4 M949.3 604.9 L998.6 694.4 M935.2 599.9 L993.8 693.1 M922.3 594.2 L989.4 691.6 M910.9 587.6 L985.5 689.9 M901.1 580.4 L982.2 688.0 M893.0 572.7 L979.4 686.0 M886.8 564.4 L977.3 683.8 M882.6 555.9 L975.9 681.6 M880.4 547.2 L975.1 679.3" stroke="#000" stroke-width="1.0" stroke-opacity="0.9" fill="none"/><path d="M1097.0 639.1 L1083.7 661.1 L1070.1 681.7 M1110.0 620.7 L1096.5 643.3 L1082.6 664.3 L1068.7 683.9 M1122.9 602.7 L1109.1 625.8 L1094.8 647.4 L1080.5 667.4 L1066.5 686.0 M1135.7 585.0 L1121.6 608.7 L1106.9 630.8 L1092.2 651.4 L1077.7 670.4 L1063.8 688.0 M1162.0 542.0 L1148.4 567.7 L1133.9 591.9 L1118.8 614.5 L1103.5 635.6 L1088.5 655.1 L1074.0 673.2 L1060.4 689.9 M1161.0 550.8 L1146.0 575.5 L1130.4 598.6 L1114.6 620.2 L1098.9 640.2 L1083.8 658.7 L1069.6 675.8 L1056.5 691.6 M1157.9 559.5 L1141.8 583.1 L1125.3 605.1 L1109.0 625.6 L1093.2 644.5 L1078.2 662.0 L1064.5 678.1 L1052.1 693.1 M1152.8 567.9 L1135.8 590.4 L1118.8 611.2 L1102.2 630.6 L1086.5 648.4 L1071.9 664.9 L1058.7 680.2 L1047.3 694.4 M1145.8 575.9 L1128.1 597.2 L1110.8 616.9 L1094.2 635.1 L1078.8 651.9 L1064.8 667.5 L1052.5 681.9 L1042.2 695.4 M1137.0 583.5 L1118.9 603.5 L1101.5 622.1 L1085.2 639.2 L1070.3 655.0 L1057.1 669.6 L1045.8 683.3 L1036.7 696.2 M1126.5 590.4 L1108.3 609.2 L1091.0 626.6 L1075.2 642.6 L1061.1 657.5 L1048.9 671.3 L1038.8 684.3 L1031.1 696.7 M1114.5 596.6 L1096.4 614.2 L1079.6 630.5 L1064.5 645.5 L1051.3 659.5 L1040.3 672.6 L1031.6 685.0 L1025.3 697.0 M1101.1 602.1 L1083.4 618.5 L1067.3 633.6 L1053.1 647.7 L1041.1 660.9 L1031.4 673.3 L1024.2 685.3 L1019.5 697.0 M1086.5 606.6 L1069.4 621.9 L1054.3 636.0 L1041.3 649.2 L1030.6 661.7 L1022.4 673.6 L1016.8 685.2 L1013.8 696.6 M1071.0 610.3 L1054.8 624.4 L1040.8 637.6 L1029.2 650.0 L1020.0 661.8 L1013.4 673.3 L1009.5 684.7 L1008.2 696.1 M1054.7 612.9 L1039.7 626.0 L1027.1 638.4 L1017.0 650.1 L1009.4 661.4 L1004.6 672.6 L1002.4 683.8 L1002.8 695.2 M1038.0 614.5 L1024.4 626.7 L1013.3 638.3 L1004.8 649.4 L999.1 660.4 L996.0 671.3 L995.6 682.5 L997.7 694.1 M1021.0 615.0 L1009.0 626.4 L999.6 637.4 L992.9 648.1 L989.0 658.7 L987.8 669.6 L989.1 680.9 L992.9 692.8 M1004.0 614.5 L993.7 625.2 L986.2 635.6 L981.5 646.0 L979.4 656.5 L980.1 667.5 L983.2 679.0 L988.7 691.3 M987.3 612.9 L978.9 623.0 L973.4 633.1 L970.6 643.3 L970.5 653.8 L973.0 664.9 L977.8 676.8 L984.9 689.5 M971.0 610.3 L964.7 620.0 L961.2 629.8 L960.4 639.9 L962.3 650.6 L966.6 662.0 L973.1 674.3 L981.6 687.6 M955.5 606.6 L951.3 616.0 L949.9 625.7 L951.2 636.0 L955.0 646.9 L961.1 658.7 L969.2 671.6 L979.0 685.6 M940.9 602.1 L938.9 611.3 L939.7 621.1 L943.0 631.5 L948.7 642.8 L956.4 655.1 L966.0 668.6 L977.0 683.4 M927.5 596.6 L927.8 605.9 L930.6 615.8 L935.9 626.6 L943.4 638.4 L952.7 651.4 L963.6 665.6 L975.7 681.2 M915.5 590.4 L918.0 599.8 L922.9 610.0 L930.1 621.3 L939.3 633.7 L950.0 647.4 L962.1 662.4 L975.1 678.9 M905.0 583.5 L909.7 593.2 L916.7 603.8 L925.7 615.7 L936.4 628.8 L948.4 643.3 L961.4 659.2 M896.2 575.9 L903.0 586.0 L911.9 597.3 L922.6 609.9 L934.7 623.8 L947.9 639.1 M889.2 567.9 L898.1 578.6 L908.8 590.5 L921.0 603.9 M884.1 559.5 L894.9 570.9 L907.3 583.6 M881.0 550.8 L893.6 563.0" stroke="#000" stroke-width="0.8" stroke-opacity="0.55" fill="none"/></g>
<path d="M874.5 239 A142.5 87 0 0 1 1159.5 239 L1162 514 C1162 545 1152 565 1139 582 A141 73 0 0 1 904 582 C892 563 881 545 881 526 L874.5 246 Z" fill="url(#gBody)"/>
<clipPath id="cBody"><path d="M874.5 239 A142.5 87 0 0 1 1159.5 239 L1162 514 C1162 545 1152 565 1139 582 A141 73 0 0 1 904 582 C892 563 881 545 881 526 L874.5 246 Z"/></clipPath>
<g clip-path="url(#cBody)"><path d="M1159.5 239.0 L1158.3 250.4 L1154.6 261.5 L1148.7 272.3 L1140.4 282.5 L1130.1 292.0 L1117.8 300.5 L1103.7 308.0 L1088.2 314.3 L1071.5 319.4 L1053.9 323.0 L1035.6 325.3 L1017.0 326.0 L998.4 325.3 L980.1 323.0 L962.5 319.4 L945.8 314.3 L930.3 308.0 L916.2 300.5 L903.9 292.0 L893.6 282.5 L885.3 272.3 L879.4 261.5 L875.7 250.4 L874.5 239.0 M1159.6 248.2 L1158.4 259.5 L1154.7 270.6 L1148.7 281.3 L1140.5 291.5 L1130.1 300.9 L1117.9 309.4 L1103.8 316.9 L1088.3 323.2 L1071.6 328.2 L1054.0 331.8 L1035.7 334.0 L1017.1 334.8 L998.5 334.0 L980.3 331.8 L962.6 328.2 L945.9 323.2 L930.4 316.9 L916.4 309.4 L904.1 300.9 L893.8 291.5 L885.5 281.3 L879.5 270.6 L875.9 259.5 L874.7 248.2 M1159.7 257.4 L1158.4 268.6 L1154.8 279.7 L1148.8 290.3 L1140.6 300.4 L1130.2 309.8 L1117.9 318.3 L1103.9 325.7 L1088.4 332.0 L1071.7 337.0 L1054.1 340.6 L1035.8 342.8 L1017.2 343.5 L998.7 342.8 L980.4 340.6 L962.7 337.0 L946.0 332.0 L930.5 325.7 L916.5 318.3 L904.3 309.8 L893.9 300.4 L885.7 290.3 L879.7 279.7 L876.1 268.6 L874.8 257.4 M1159.7 266.5 L1158.5 277.7 L1154.9 288.7 L1148.9 299.4 L1140.7 309.4 L1130.3 318.7 L1118.0 327.2 L1104.0 334.6 L1088.5 340.8 L1071.8 345.7 L1054.2 349.4 L1035.9 351.5 L1017.4 352.3 L998.8 351.5 L980.5 349.4 L962.9 345.7 L946.2 340.8 L930.7 334.6 L916.7 327.2 L904.4 318.7 L894.1 309.4 L885.8 299.4 L879.9 288.7 L876.2 277.7 L875.0 266.5 M1159.8 275.7 L1158.6 286.9 L1155.0 297.8 L1149.0 308.4 L1140.7 318.4 L1130.4 327.7 L1118.1 336.0 L1104.1 343.4 L1088.6 349.6 L1071.9 354.5 L1054.3 358.1 L1036.1 360.3 L1017.5 361.0 L998.9 360.3 L980.7 358.1 L963.0 354.5 L946.3 349.6 L930.8 343.4 L916.9 336.0 L904.6 327.7 L894.2 318.4 L886.0 308.4 L880.0 297.8 L876.4 286.9 L875.2 275.7 M1159.9 284.9 L1158.7 296.0 L1155.0 306.9 L1149.0 317.4 L1140.8 327.3 L1130.5 336.6 L1118.2 344.9 L1104.2 352.2 L1088.7 358.4 L1072.1 363.3 L1054.4 366.9 L1036.2 369.1 L1017.6 369.8 L999.0 369.1 L980.8 366.9 L963.2 363.3 L946.5 358.4 L931.0 352.2 L917.0 344.9 L904.7 336.6 L894.4 327.3 L886.2 317.4 L880.2 306.9 L876.6 296.0 L875.3 284.9 M1160.0 294.1 L1158.7 305.1 L1155.1 315.9 L1149.1 326.4 L1140.9 336.3 L1130.6 345.5 L1118.3 353.8 L1104.3 361.1 L1088.8 367.2 L1072.2 372.1 L1054.5 375.7 L1036.3 377.8 L1017.7 378.5 L999.2 377.8 L980.9 375.7 L963.3 372.1 L946.6 367.2 L931.1 361.1 L917.2 353.8 L904.9 345.5 L894.6 336.3 L886.3 326.4 L880.3 315.9 L876.7 305.1 L875.5 294.1 M1160.0 303.3 L1158.8 314.2 L1155.2 325.0 L1149.2 335.4 L1141.0 345.3 L1130.6 354.4 L1118.4 362.7 L1104.4 369.9 L1088.9 376.0 L1072.3 380.9 L1054.6 384.4 L1036.4 386.6 L1017.8 387.3 L999.3 386.6 L981.0 384.4 L963.4 380.9 L946.8 376.0 L931.3 369.9 L917.3 362.7 L905.0 354.4 L894.7 345.3 L886.5 335.4 L880.5 325.0 L876.9 314.2 L875.7 303.3 M1160.1 312.5 L1158.9 323.4 L1155.3 334.1 L1149.3 344.4 L1141.1 354.3 L1130.7 363.4 L1118.5 371.6 L1104.5 378.8 L1089.0 384.9 L1072.4 389.7 L1054.8 393.2 L1036.5 395.3 L1018.0 396.1 L999.4 395.3 L981.2 393.2 L963.6 389.7 L946.9 384.9 L931.4 378.8 L917.5 371.6 L905.2 363.4 L894.9 354.3 L886.7 344.4 L880.7 334.1 L877.0 323.4 L875.8 312.5 M1160.2 321.6 L1159.0 332.5 L1155.3 343.2 L1149.4 353.5 L1141.1 363.2 L1130.8 372.3 L1118.6 380.5 L1104.6 387.6 L1089.1 393.7 L1072.5 398.5 L1054.9 402.0 L1036.6 404.1 L1018.1 404.8 L999.5 404.1 L981.3 402.0 L963.7 398.5 L947.0 393.7 L931.6 387.6 L917.6 380.5 L905.4 372.3 L895.0 363.2 L886.8 353.5 L880.8 343.2 L877.2 332.5 L876.0 321.6 M1160.3 330.8 L1159.0 341.6 L1155.4 352.2 L1149.4 362.5 L1141.2 372.2 L1130.9 381.2 L1118.7 389.3 L1104.7 396.5 L1089.2 402.5 L1072.6 407.3 L1055.0 410.8 L1036.8 412.9 L1018.2 413.6 L999.7 412.9 L981.4 410.8 L963.9 407.3 L947.2 402.5 L931.7 396.5 L917.8 389.3 L905.5 381.2 L895.2 372.2 L887.0 362.5 L881.0 352.2 L877.4 341.6 L876.2 330.8 M1160.3 340.0 L1159.1 350.7 L1155.5 361.3 L1149.5 371.5 L1141.3 381.2 L1131.0 390.1 L1118.7 398.2 L1104.8 405.3 L1089.3 411.3 L1072.7 416.1 L1055.1 419.5 L1036.9 421.6 L1018.3 422.3 L999.8 421.6 L981.6 419.5 L964.0 416.1 L947.3 411.3 L931.9 405.3 L917.9 398.2 L905.7 390.1 L895.4 381.2 L887.1 371.5 L881.2 361.3 L877.5 350.7 L876.3 340.0 M1160.4 349.2 L1159.2 359.9 L1155.6 370.4 L1149.6 380.5 L1141.4 390.1 L1131.1 399.0 L1118.8 407.1 L1104.9 414.2 L1089.4 420.1 L1072.8 424.9 L1055.2 428.3 L1037.0 430.4 L1018.5 431.1 L999.9 430.4 L981.7 428.3 L964.1 424.9 L947.5 420.1 L932.0 414.2 L918.1 407.1 L905.8 399.0 L895.5 390.1 L887.3 380.5 L881.3 370.4 L877.7 359.9 L876.5 349.2 M1160.5 358.4 L1159.3 369.0 L1155.6 379.5 L1149.7 389.5 L1141.5 399.1 L1131.2 408.0 L1118.9 416.0 L1105.0 423.0 L1089.5 428.9 L1072.9 433.6 L1055.3 437.1 L1037.1 439.2 L1018.6 439.8 L1000.1 439.2 L981.8 437.1 L964.3 433.6 L947.6 428.9 L932.2 423.0 L918.2 416.0 L906.0 408.0 L895.7 399.1 L887.5 389.5 L881.5 379.5 L877.9 369.0 L876.7 358.4 M1160.6 367.5 L1159.3 378.1 L1155.7 388.5 L1149.8 398.6 L1141.6 408.1 L1131.2 416.9 L1119.0 424.9 L1105.1 431.9 L1089.6 437.7 L1073.0 442.4 L1055.4 445.8 L1037.2 447.9 L1018.7 448.6 L1000.2 447.9 L982.0 445.8 L964.4 442.4 L947.8 437.7 L932.3 431.9 L918.4 424.9 L906.1 416.9 L895.8 408.1 L887.6 398.6 L881.7 388.5 L878.0 378.1 L876.8 367.5 M1160.6 376.7 L1159.4 387.3 L1155.8 397.6 L1149.8 407.6 L1141.6 417.0 L1131.3 425.8 L1119.1 433.7 L1105.2 440.7 L1089.7 446.6 L1073.1 451.2 L1055.5 454.6 L1037.3 456.7 L1018.8 457.4 L1000.3 456.7 L982.1 454.6 L964.5 451.2 L947.9 446.6 L932.5 440.7 L918.5 433.7 L906.3 425.8 L896.0 417.0 L887.8 407.6 L881.8 397.6 L878.2 387.3 L877.0 376.7 M1160.7 385.9 L1159.5 396.4 L1155.9 406.7 L1149.9 416.6 L1141.7 426.0 L1131.4 434.7 L1119.2 442.6 L1105.2 449.5 L1089.8 455.4 L1073.2 460.0 L1055.6 463.4 L1037.4 465.4 L1018.9 466.1 L1000.4 465.4 L982.2 463.4 L964.7 460.0 L948.1 455.4 L932.6 449.5 L918.7 442.6 L906.5 434.7 L896.2 426.0 L888.0 416.6 L882.0 406.7 L878.4 396.4 L877.2 385.9 M1160.8 395.1 L1159.6 405.5 L1156.0 415.7 L1150.0 425.6 L1141.8 435.0 L1131.5 443.7 L1119.3 451.5 L1105.3 458.4 L1089.9 464.2 L1073.3 468.8 L1055.7 472.2 L1037.6 474.2 L1019.1 474.9 L1000.6 474.2 L982.4 472.2 L964.8 468.8 L948.2 464.2 L932.8 458.4 L918.8 451.5 L906.6 443.7 L896.3 435.0 L888.1 425.6 L882.2 415.7 L878.5 405.5 L877.3 395.1 M1160.9 404.3 L1159.7 414.6 L1156.0 424.8 L1150.1 434.6 L1141.9 444.0 L1131.6 452.6 L1119.4 460.4 L1105.4 467.2 L1090.0 473.0 L1073.4 477.6 L1055.9 480.9 L1037.7 483.0 L1019.2 483.6 L1000.7 483.0 L982.5 480.9 L965.0 477.6 L948.3 473.0 L932.9 467.2 L919.0 460.4 L906.8 452.6 L896.5 444.0 L888.3 434.6 L882.3 424.8 L878.7 414.6 L877.5 404.3 M1160.9 413.5 L1159.7 423.8 L1156.1 433.9 L1150.2 443.7 L1142.0 452.9 L1131.7 461.5 L1119.5 469.3 L1105.5 476.1 L1090.1 481.8 L1073.5 486.4 L1056.0 489.7 L1037.8 491.7 L1019.3 492.4 L1000.8 491.7 L982.6 489.7 L965.1 486.4 L948.5 481.8 L933.1 476.1 L919.2 469.3 L906.9 461.5 L896.6 452.9 L888.4 443.7 L882.5 433.9 L878.9 423.8 L877.7 413.5 M1161.0 422.6 L1159.8 432.9 L1156.2 443.0 L1150.2 452.7 L1142.0 461.9 L1131.8 470.4 L1119.5 478.2 L1105.6 484.9 L1090.2 490.6 L1073.6 495.2 L1056.1 498.5 L1037.9 500.5 L1019.4 501.2 L1000.9 500.5 L982.8 498.5 L965.2 495.2 L948.6 490.6 L933.2 484.9 L919.3 478.2 L907.1 470.4 L896.8 461.9 L888.6 452.7 L882.7 443.0 L879.0 432.9 L877.8 422.6 M1161.1 431.8 L1159.9 442.0 L1156.3 452.0 L1150.3 461.7 L1142.1 470.9 L1131.8 479.4 L1119.6 487.0 L1105.7 493.8 L1090.3 499.4 L1073.7 504.0 L1056.2 507.2 L1038.0 509.2 L1019.5 509.9 L1001.1 509.2 L982.9 507.2 L965.4 504.0 L948.8 499.4 L933.4 493.8 L919.5 487.0 L907.2 479.4 L897.0 470.9 L888.8 461.7 L882.8 452.0 L879.2 442.0 L878.0 431.8 M1161.2 441.0 L1160.0 451.1 L1156.3 461.1 L1150.4 470.7 L1142.2 479.8 L1131.9 488.3 L1119.7 495.9 L1105.8 502.6 L1090.4 508.3 L1073.8 512.8 L1056.3 516.0 L1038.1 518.0 L1019.7 518.7 L1001.2 518.0 L983.0 516.0 L965.5 512.8 L948.9 508.3 L933.5 502.6 L919.6 495.9 L907.4 488.3 L897.1 479.8 L888.9 470.7 L883.0 461.1 L879.4 451.1 L878.2 441.0 M1161.2 450.2 L1160.0 460.3 L1156.4 470.2 L1150.5 479.7 L1142.3 488.8 L1132.0 497.2 L1119.8 504.8 L1105.9 511.5 L1090.5 517.1 L1073.9 521.5 L1056.4 524.8 L1038.3 526.8 L1019.8 527.4 L1001.3 526.8 L983.2 524.8 L965.7 521.5 L949.1 517.1 L933.7 511.5 L919.8 504.8 L907.6 497.2 L897.3 488.8 L889.1 479.7 L883.2 470.2 L879.5 460.3 L878.3 450.2 M1161.3 459.4 L1160.1 469.4 L1156.5 479.2 L1150.6 488.8 L1142.4 497.8 L1132.1 506.1 L1119.9 513.7 L1106.0 520.3 L1090.6 525.9 L1074.0 530.3 L1056.5 533.6 L1038.4 535.5 L1019.9 536.2 L1001.5 535.5 L983.3 533.6 L965.8 530.3 L949.2 525.9 L933.8 520.3 L919.9 513.7 L907.7 506.1 L897.4 497.8 L889.3 488.8 L883.3 479.2 L879.7 469.4 L878.5 459.4 M1161.4 468.5 L1160.2 478.5 L1156.6 488.3 L1150.6 497.8 L1142.5 506.7 L1132.2 515.1 L1120.0 522.6 L1106.1 529.2 L1090.7 534.7 L1074.1 539.1 L1056.6 542.3 L1038.5 544.3 L1020.0 544.9 L1001.6 544.3 L983.4 542.3 L965.9 539.1 L949.3 534.7 L934.0 529.2 L920.1 522.6 L907.9 515.1 L897.6 506.7 L889.4 497.8 L883.5 488.3 L879.9 478.5 L878.7 468.5 M1161.5 477.7 L1160.3 487.6 L1156.7 497.4 L1150.7 506.8 L1142.5 515.7 L1132.3 524.0 L1120.1 531.4 L1106.2 538.0 L1090.8 543.5 L1074.2 547.9 L1056.7 551.1 L1038.6 553.0 L1020.2 553.7 L1001.7 553.0 L983.6 551.1 L966.1 547.9 L949.5 543.5 L934.1 538.0 L920.2 531.4 L908.0 524.0 L897.8 515.7 L889.6 506.8 L883.6 497.4 L880.0 487.6 L878.8 477.7 M1161.5 486.9 L1160.3 496.8 L1156.7 506.5 L1150.8 515.8 L1142.6 524.7 L1132.4 532.9 L1120.2 540.3 L1106.3 546.8 L1090.9 552.3 L1074.3 556.7 L1056.8 559.9 L1038.7 561.8 L1020.3 562.5 L1001.8 561.8 L983.7 559.9 L966.2 556.7 L949.6 552.3 L934.3 546.8 L920.4 540.3 L908.2 532.9 L897.9 524.7 L889.8 515.8 L883.8 506.5 L880.2 496.8 L879.0 486.9 M1161.6 496.1 L1160.4 505.9 L1156.8 515.5 L1150.9 524.8 L1142.7 533.7 L1132.4 541.8 L1120.3 549.2 L1106.4 555.7 L1091.0 561.1 L1074.4 565.5 L1056.9 568.7 L1038.8 570.6 L1020.4 571.2 L1002.0 570.6 L983.8 568.7 L966.3 565.5 L949.8 561.1 L934.4 555.7 L920.5 549.2 L908.4 541.8 L898.1 533.7 L889.9 524.8 L884.0 515.5 L880.4 505.9 L879.2 496.1 M1161.7 505.3 L1160.5 515.0 L1156.9 524.6 L1151.0 533.9 L1142.8 542.6 L1132.5 550.7 L1120.3 558.1 L1106.5 564.5 L1091.1 570.0 L1074.5 574.3 L1057.1 577.4 L1038.9 579.3 L1020.5 580.0 L1002.1 579.3 L984.0 577.4 L966.5 574.3 L949.9 570.0 L934.6 564.5 L920.7 558.1 L908.5 550.7 L898.2 542.6 L890.1 533.9 L884.1 524.6 L880.5 515.0 L879.3 505.3 M1161.8 514.5 L1160.6 524.1 L1157.0 533.7 L1151.0 542.9 L1142.9 551.6 L1132.6 559.7 L1120.4 567.0 L1106.6 573.4 L1091.2 578.8 L1074.6 583.1 L1057.2 586.2 L1039.1 588.1 L1020.6 588.7 L1002.2 588.1 L984.1 586.2 L966.6 583.1 L950.1 578.8 L934.7 573.4 L920.8 567.0 L908.7 559.7 L898.4 551.6 L890.2 542.9 L884.3 533.7 L880.7 524.1 L879.5 514.5 M1161.8 523.6 L1160.6 533.3 L1157.0 542.7 L1151.1 551.9 L1142.9 560.6 L1132.7 568.6 L1120.5 575.9 L1106.6 582.2 L1091.3 587.6 L1074.8 591.9 L1057.3 595.0 L1039.2 596.9 L1020.8 597.5 L1002.3 596.9 L984.2 595.0 L966.8 591.9 L950.2 587.6 L934.9 582.2 L921.0 575.9 L908.8 568.6 L898.6 560.6 L890.4 551.9 L884.5 542.7 L880.9 533.3 L879.7 523.6 M1161.9 532.8 L1160.7 542.4 L1157.1 551.8 L1151.2 560.9 L1143.0 569.5 L1132.8 577.5 L1120.6 584.7 L1106.7 591.1 L1091.4 596.4 L1074.9 600.7 L1057.4 603.7 L1039.3 605.6 L1020.9 606.2 L1002.5 605.6 L984.4 603.7 L966.9 600.7 L950.4 596.4 L935.0 591.1 L921.1 584.7 L909.0 577.5 L898.7 569.5 L890.6 560.9 L884.6 551.8 L881.0 542.4 L879.8 532.8 M1162.0 542.0 L1160.8 551.5 L1157.2 560.9 L1151.3 569.9 L1143.1 578.5 L1132.9 586.4 L1120.7 593.6 L1106.8 599.9 L1091.5 605.2 L1075.0 609.4 L1057.5 612.5 L1039.4 614.4 L1021.0 615.0 L1002.6 614.4 L984.5 612.5 L967.0 609.4 L950.5 605.2 L935.2 599.9 L921.3 593.6 L909.1 586.4 L898.9 578.5 L890.7 569.9 L884.8 560.9 L881.2 551.5 L880.0 542.0 M1159.4 241.6 L1161.9 544.2 M1158.6 248.6 L1161.1 550.1 M1156.9 255.5 L1159.4 555.9 M1154.3 262.3 L1156.8 561.6 M1150.8 269.0 L1153.3 567.2 M1146.4 275.5 L1149.0 572.6 M1141.1 281.7 L1143.8 577.8 M1135.1 287.7 L1137.9 582.8 M1128.3 293.3 L1131.1 587.6 M1120.8 298.6 L1123.7 592.0 M1112.6 303.5 L1115.6 596.1 M1103.8 308.0 L1106.9 599.9 M1094.4 312.0 L1097.6 603.3 M1084.5 315.6 L1087.8 606.3 M1074.2 318.7 L1077.6 608.9 M1063.5 321.2 L1067.0 611.0 M1052.5 323.3 L1056.1 612.7 M1041.3 324.7 L1045.0 613.9 M1029.9 325.6 L1033.8 614.7 M1018.5 326.0 L1022.4 615.0 M1007.0 325.8 L1011.1 614.8 M995.6 325.0 L999.8 614.2 M984.3 323.7 L988.7 613.1 M973.3 321.8 L977.7 611.5 M962.5 319.4 L967.1 609.4 M952.1 316.4 L956.8 607.0 M942.1 313.0 L946.9 604.1 M932.6 309.1 L937.5 600.8 M923.6 304.7 L928.6 597.1 M915.2 299.9 L920.3 593.1 M907.6 294.7 L912.7 588.7 M900.6 289.2 L905.8 584.1 M894.3 283.3 L899.6 579.1 M888.9 277.1 L894.2 574.0 M884.3 270.7 L889.7 568.6 M880.5 264.1 L886.0 563.0 M877.7 257.3 L883.1 557.3 M875.7 250.4 L881.2 551.5 M874.7 243.4 L880.2 545.7" stroke="#000" stroke-width="1.0" stroke-opacity="0.8" fill="none"/></g>
<path d="M1159.5 239 L1162 514 C1162 545 1152 560 1140 575 L1071 678 L1072 820 A47 27 0 0 1 978 820 L975 678 L905 580 C892 563 881 545 881 526 L881 500" fill="none" stroke="#001a00" stroke-width="1.2"/>
<path d="M874.5 244 L807 367 L893 379 L925 328 L935 300 L900 250 Z" fill="#00a400"/><path d="M874.5 244 L807 367 L893 379 L925 328 L935 300 L900 250 Z" fill="url(#pInTop)"/>
<path d="M874.5 244 L806.5 367 L812 367 L878 252 Z" fill="#005000"/>
<path d="M874.5 239 A142.5 87 0 0 0 930 309 L929 316 A142.5 87 0 0 1 874.5 246 Z" fill="#006800"/>
<ellipse cx="1017" cy="239" rx="142.5" ry="87" fill="#00a200"/>
<ellipse cx="1017" cy="239" rx="142.5" ry="87" fill="url(#pTop)"/>
<path d="M880 262 A142.5 87 0 0 0 1154 262" fill="none" stroke="#00d800" stroke-width="7" stroke-opacity="0.25"/>
<path d="M1159.5 239 A142.5 87 0 0 1 1017 326 L1017 320 A138 82 0 0 0 1155 239 Z" fill="#00b400" fill-opacity="0.4"/>
<ellipse cx="1017" cy="240" rx="74.5" ry="46" fill="url(#gHole)"/>
<clipPath id="cHole"><ellipse cx="1017" cy="240" rx="74.5" ry="46"/></clipPath>
<g clip-path="url(#cHole)"><path d="M942.5 194.0 L943.1 188.0 L945.0 182.1 L948.2 176.4 L952.5 171.0 L957.9 166.0 L964.3 161.5 L971.6 157.5 L979.8 154.2 L988.5 151.5 L997.7 149.6 L1007.3 148.4 L1017.0 148.0 L1026.7 148.4 L1036.3 149.6 L1045.5 151.5 L1054.2 154.2 L1062.4 157.5 L1069.7 161.5 L1076.1 166.0 L1081.5 171.0 L1085.8 176.4 L1089.0 182.1 L1090.9 188.0 L1091.5 194.0 M942.5 203.6 L943.1 197.6 L945.0 191.7 L948.2 186.0 L952.5 180.6 L957.9 175.6 L964.3 171.1 L971.6 167.1 L979.8 163.8 L988.5 161.1 L997.7 159.2 L1007.3 158.0 L1017.0 157.6 L1026.7 158.0 L1036.3 159.2 L1045.5 161.1 L1054.2 163.8 L1062.4 167.1 L1069.7 171.1 L1076.1 175.6 L1081.5 180.6 L1085.8 186.0 L1089.0 191.7 L1090.9 197.6 L1091.5 203.6 M942.5 213.3 L943.1 207.3 L945.0 201.4 L948.2 195.7 L952.5 190.3 L957.9 185.3 L964.3 180.7 L971.6 176.8 L979.8 173.4 L988.5 170.8 L997.7 168.8 L1007.3 167.7 L1017.0 167.3 L1026.7 167.7 L1036.3 168.8 L1045.5 170.8 L1054.2 173.4 L1062.4 176.8 L1069.7 180.7 L1076.1 185.3 L1081.5 190.3 L1085.8 195.7 L1089.0 201.4 L1090.9 207.3 L1091.5 213.3 M942.5 222.9 L943.1 216.9 L945.0 211.0 L948.2 205.3 L952.5 199.9 L957.9 194.9 L964.3 190.4 L971.6 186.4 L979.8 183.1 L988.5 180.4 L997.7 178.5 L1007.3 177.3 L1017.0 176.9 L1026.7 177.3 L1036.3 178.5 L1045.5 180.4 L1054.2 183.1 L1062.4 186.4 L1069.7 190.4 L1076.1 194.9 L1081.5 199.9 L1085.8 205.3 L1089.0 211.0 L1090.9 216.9 L1091.5 222.9 M942.5 232.5 L943.1 226.5 L945.0 220.6 L948.2 214.9 L952.5 209.5 L957.9 204.5 L964.3 200.0 L971.6 196.1 L979.8 192.7 L988.5 190.0 L997.7 188.1 L1007.3 186.9 L1017.0 186.5 L1026.7 186.9 L1036.3 188.1 L1045.5 190.0 L1054.2 192.7 L1062.4 196.1 L1069.7 200.0 L1076.1 204.5 L1081.5 209.5 L1085.8 214.9 L1089.0 220.6 L1090.9 226.5 L1091.5 232.5 M942.5 242.2 L943.1 236.2 L945.0 230.3 L948.2 224.6 L952.5 219.2 L957.9 214.2 L964.3 209.7 L971.6 205.7 L979.8 202.3 L988.5 199.7 L997.7 197.7 L1007.3 196.6 L1017.0 196.2 L1026.7 196.6 L1036.3 197.7 L1045.5 199.7 L1054.2 202.3 L1062.4 205.7 L1069.7 209.7 L1076.1 214.2 L1081.5 219.2 L1085.8 224.6 L1089.0 230.3 L1090.9 236.2 L1091.5 242.2 M942.5 251.8 L943.1 245.8 L945.0 239.9 L948.2 234.2 L952.5 228.8 L957.9 223.8 L964.3 219.3 L971.6 215.3 L979.8 212.0 L988.5 209.3 L997.7 207.4 L1007.3 206.2 L1017.0 205.8 L1026.7 206.2 L1036.3 207.4 L1045.5 209.3 L1054.2 212.0 L1062.4 215.3 L1069.7 219.3 L1076.1 223.8 L1081.5 228.8 L1085.8 234.2 L1089.0 239.9 L1090.9 245.8 L1091.5 251.8 M942.5 261.5 L943.1 255.5 L945.0 249.5 L948.2 243.9 L952.5 238.5 L957.9 233.5 L964.3 228.9 L971.6 225.0 L979.8 221.6 L988.5 219.0 L997.7 217.0 L1007.3 215.8 L1017.0 215.5 L1026.7 215.8 L1036.3 217.0 L1045.5 219.0 L1054.2 221.6 L1062.4 225.0 L1069.7 228.9 L1076.1 233.5 L1081.5 238.5 L1085.8 243.9 L1089.0 249.5 L1090.9 255.5 L1091.5 261.5 M942.5 271.1 L943.1 265.1 L945.0 259.2 L948.2 253.5 L952.5 248.1 L957.9 243.1 L964.3 238.6 L971.6 234.6 L979.8 231.3 L988.5 228.6 L997.7 226.7 L1007.3 225.5 L1017.0 225.1 L1026.7 225.5 L1036.3 226.7 L1045.5 228.6 L1054.2 231.3 L1062.4 234.6 L1069.7 238.6 L1076.1 243.1 L1081.5 248.1 L1085.8 253.5 L1089.0 259.2 L1090.9 265.1 L1091.5 271.1 M942.5 280.7 L943.1 274.7 L945.0 268.8 L948.2 263.1 L952.5 257.7 L957.9 252.7 L964.3 248.2 L971.6 244.2 L979.8 240.9 L988.5 238.2 L997.7 236.3 L1007.3 235.1 L1017.0 234.7 L1026.7 235.1 L1036.3 236.3 L1045.5 238.2 L1054.2 240.9 L1062.4 244.2 L1069.7 248.2 L1076.1 252.7 L1081.5 257.7 L1085.8 263.1 L1089.0 268.8 L1090.9 274.7 L1091.5 280.7 M942.5 290.4 L943.1 284.4 L945.0 278.5 L948.2 272.8 L952.5 267.4 L957.9 262.4 L964.3 257.8 L971.6 253.9 L979.8 250.5 L988.5 247.9 L997.7 245.9 L1007.3 244.8 L1017.0 244.4 L1026.7 244.8 L1036.3 245.9 L1045.5 247.9 L1054.2 250.5 L1062.4 253.9 L1069.7 257.8 L1076.1 262.4 L1081.5 267.4 L1085.8 272.8 L1089.0 278.5 L1090.9 284.4 L1091.5 290.4 M942.5 300.0 L943.1 294.0 L945.0 288.1 L948.2 282.4 L952.5 277.0 L957.9 272.0 L964.3 267.5 L971.6 263.5 L979.8 260.2 L988.5 257.5 L997.7 255.6 L1007.3 254.4 L1017.0 254.0 L1026.7 254.4 L1036.3 255.6 L1045.5 257.5 L1054.2 260.2 L1062.4 263.5 L1069.7 267.5 L1076.1 272.0 L1081.5 277.0 L1085.8 282.4 L1089.0 288.1 L1090.9 294.0 L1091.5 300.0 M1090.7 200.5 L1090.7 306.5 M1088.5 207.0 L1088.5 313.0 M1084.8 213.1 L1084.8 319.1 M1079.7 218.9 L1079.7 324.9 M1073.3 224.1 L1073.3 330.1 M1065.8 228.8 L1065.8 334.8 M1057.3 232.7 L1057.3 338.7 M1047.9 235.8 L1047.9 341.8 M1038.0 238.1 L1038.0 344.1 M1027.6 239.5 L1027.6 345.5 M1017.0 240.0 L1017.0 346.0 M1006.4 239.5 L1006.4 345.5 M996.0 238.1 L996.0 344.1 M986.1 235.8 L986.1 341.8 M976.7 232.7 L976.7 338.7 M968.2 228.8 L968.2 334.8 M960.7 224.1 L960.7 330.1 M954.3 218.9 L954.3 324.9 M949.2 213.1 L949.2 319.1 M945.5 207.0 L945.5 313.0 M943.3 200.5 L943.3 306.5 M942.5 194.0 L942.5 300.0" stroke="#000" stroke-width="1.0" stroke-opacity="0.8" fill="none"/><ellipse cx="1017" cy="300" rx="74.5" ry="46" fill="#00a200"/><ellipse cx="1017" cy="300" rx="74.5" ry="46" fill="url(#pTop)"/></g>
<path d="M970.5 162 L1063.5 162 L1063.5 255 A46.5 30 0 0 1 970.5 255 Z" fill="url(#gOut)"/>
<clipPath id="cOut"><path d="M970.5 162 L1063.5 162 L1063.5 255 A46.5 30 0 0 1 970.5 255 Z"/></clipPath>
<g clip-path="url(#cOut)"><path d="M1063.5 162.0 L1063.1 165.9 L1061.9 169.8 L1060.0 173.5 L1057.3 177.0 L1053.9 180.3 L1049.9 183.2 L1045.3 185.8 L1040.2 188.0 L1034.8 189.7 L1029.0 191.0 L1023.1 191.7 L1017.0 192.0 L1010.9 191.7 L1005.0 191.0 L999.2 189.7 L993.8 188.0 L988.7 185.8 L984.1 183.2 L980.1 180.3 L976.7 177.0 L974.0 173.5 L972.1 169.8 L970.9 165.9 L970.5 162.0 M1063.5 171.4 L1063.1 175.3 L1061.9 179.2 L1060.0 182.9 L1057.3 186.4 L1053.9 189.7 L1049.9 192.6 L1045.3 195.2 L1040.2 197.4 L1034.8 199.1 L1029.0 200.4 L1023.1 201.1 L1017.0 201.4 L1010.9 201.1 L1005.0 200.4 L999.2 199.1 L993.8 197.4 L988.7 195.2 L984.1 192.6 L980.1 189.7 L976.7 186.4 L974.0 182.9 L972.1 179.2 L970.9 175.3 L970.5 171.4 M1063.5 180.8 L1063.1 184.7 L1061.9 188.6 L1060.0 192.3 L1057.3 195.8 L1053.9 199.1 L1049.9 202.0 L1045.3 204.6 L1040.2 206.8 L1034.8 208.5 L1029.0 209.8 L1023.1 210.5 L1017.0 210.8 L1010.9 210.5 L1005.0 209.8 L999.2 208.5 L993.8 206.8 L988.7 204.6 L984.1 202.0 L980.1 199.1 L976.7 195.8 L974.0 192.3 L972.1 188.6 L970.9 184.7 L970.5 180.8 M1063.5 190.2 L1063.1 194.1 L1061.9 198.0 L1060.0 201.7 L1057.3 205.2 L1053.9 208.5 L1049.9 211.4 L1045.3 214.0 L1040.2 216.2 L1034.8 217.9 L1029.0 219.2 L1023.1 219.9 L1017.0 220.2 L1010.9 219.9 L1005.0 219.2 L999.2 217.9 L993.8 216.2 L988.7 214.0 L984.1 211.4 L980.1 208.5 L976.7 205.2 L974.0 201.7 L972.1 198.0 L970.9 194.1 L970.5 190.2 M1063.5 199.6 L1063.1 203.5 L1061.9 207.4 L1060.0 211.1 L1057.3 214.6 L1053.9 217.9 L1049.9 220.8 L1045.3 223.4 L1040.2 225.6 L1034.8 227.3 L1029.0 228.6 L1023.1 229.3 L1017.0 229.6 L1010.9 229.3 L1005.0 228.6 L999.2 227.3 L993.8 225.6 L988.7 223.4 L984.1 220.8 L980.1 217.9 L976.7 214.6 L974.0 211.1 L972.1 207.4 L970.9 203.5 L970.5 199.6 M1063.5 209.0 L1063.1 212.9 L1061.9 216.8 L1060.0 220.5 L1057.3 224.0 L1053.9 227.3 L1049.9 230.2 L1045.3 232.8 L1040.2 235.0 L1034.8 236.7 L1029.0 238.0 L1023.1 238.7 L1017.0 239.0 L1010.9 238.7 L1005.0 238.0 L999.2 236.7 L993.8 235.0 L988.7 232.8 L984.1 230.2 L980.1 227.3 L976.7 224.0 L974.0 220.5 L972.1 216.8 L970.9 212.9 L970.5 209.0 M1063.5 218.4 L1063.1 222.3 L1061.9 226.2 L1060.0 229.9 L1057.3 233.4 L1053.9 236.7 L1049.9 239.6 L1045.3 242.2 L1040.2 244.4 L1034.8 246.1 L1029.0 247.4 L1023.1 248.1 L1017.0 248.4 L1010.9 248.1 L1005.0 247.4 L999.2 246.1 L993.8 244.4 L988.7 242.2 L984.1 239.6 L980.1 236.7 L976.7 233.4 L974.0 229.9 L972.1 226.2 L970.9 222.3 L970.5 218.4 M1063.5 227.8 L1063.1 231.7 L1061.9 235.6 L1060.0 239.3 L1057.3 242.8 L1053.9 246.1 L1049.9 249.0 L1045.3 251.6 L1040.2 253.8 L1034.8 255.5 L1029.0 256.8 L1023.1 257.5 L1017.0 257.8 L1010.9 257.5 L1005.0 256.8 L999.2 255.5 L993.8 253.8 L988.7 251.6 L984.1 249.0 L980.1 246.1 L976.7 242.8 L974.0 239.3 L972.1 235.6 L970.9 231.7 L970.5 227.8 M1063.5 237.2 L1063.1 241.1 L1061.9 245.0 L1060.0 248.7 L1057.3 252.2 L1053.9 255.5 L1049.9 258.4 L1045.3 261.0 L1040.2 263.2 L1034.8 264.9 L1029.0 266.2 L1023.1 266.9 L1017.0 267.2 L1010.9 266.9 L1005.0 266.2 L999.2 264.9 L993.8 263.2 L988.7 261.0 L984.1 258.4 L980.1 255.5 L976.7 252.2 L974.0 248.7 L972.1 245.0 L970.9 241.1 L970.5 237.2 M1063.5 246.6 L1063.1 250.5 L1061.9 254.4 L1060.0 258.1 L1057.3 261.6 L1053.9 264.9 L1049.9 267.8 L1045.3 270.4 L1040.2 272.6 L1034.8 274.3 L1029.0 275.6 L1023.1 276.3 L1017.0 276.6 L1010.9 276.3 L1005.0 275.6 L999.2 274.3 L993.8 272.6 L988.7 270.4 L984.1 267.8 L980.1 264.9 L976.7 261.6 L974.0 258.1 L972.1 254.4 L970.9 250.5 L970.5 246.6 M1063.5 256.0 L1063.1 259.9 L1061.9 263.8 L1060.0 267.5 L1057.3 271.0 L1053.9 274.3 L1049.9 277.2 L1045.3 279.8 L1040.2 282.0 L1034.8 283.7 L1029.0 285.0 L1023.1 285.7 L1017.0 286.0 L1010.9 285.7 L1005.0 285.0 L999.2 283.7 L993.8 282.0 L988.7 279.8 L984.1 277.2 L980.1 274.3 L976.7 271.0 L974.0 267.5 L972.1 263.8 L970.9 259.9 L970.5 256.0 M1063.2 165.6 L1063.2 259.6 M1060.8 172.1 L1060.8 266.1 M1056.2 178.2 L1056.2 272.2 M1049.6 183.4 L1049.6 277.4 M1041.4 187.5 L1041.4 281.5 M1032.0 190.4 L1032.0 284.4 M1021.8 191.8 L1021.8 285.8 M1011.4 191.8 L1011.4 285.8 M1001.3 190.2 L1001.3 284.2 M992.0 187.3 L992.0 281.3 M983.9 183.0 L983.9 277.0 M977.4 177.8 L977.4 271.8 M973.0 171.7 L973.0 265.7 M970.8 165.1 L970.8 259.1" stroke="#000" stroke-width="1.0" stroke-opacity="0.8" fill="none"/></g>
<path d="M970.5 162 L970.5 255 M1063.5 162 L1063.5 255" stroke="#002000" stroke-width="1.2"/>
<ellipse cx="1017" cy="162" rx="46.5" ry="30" fill="#0000b4"/>
<ellipse cx="1017" cy="162" rx="46.5" ry="30" fill="url(#pBlue)" stroke="#000020" stroke-width="1"/>
<path d="M893 380 L927 322 L927 462 L897 516 Z" fill="#005a00"/><path d="M893 380 L927 322 L927 462 L897 516 Z" fill="url(#pInR)"/>
<path d="M807 368 L890 379 Q896 381 896 388 L896 521 Q896 527 890 526 L820 511 L808 500 Z" fill="#d80000"/><path d="M807 368 L890 379 Q896 381 896 388 L896 521 Q896 527 890 526 L820 511 L808 500 Z" fill="url(#pRed)" stroke="#200000" stroke-width="0.8"/>
<g>
<line x1="726.4" y1="803" x2="726.4" y2="778" stroke="#00e600" stroke-width="1.3"/>
<path d="M723.3 779.5 L726.4 772.3 L729.4 779.5 Z" fill="#00c000"/>
<text x="731" y="773" font-family="Liberation Sans" font-size="10.5" font-weight="bold" font-style="italic" fill="#00ee00">Y</text>
<line x1="726.4" y1="803" x2="756" y2="809.3" stroke="#ff1a1a" stroke-width="1.3"/>
<path d="M754.8 806.5 L762.5 810.3 L754.6 812.6 Z" fill="#e00000"/>
<text x="757.5" y="804" font-family="Liberation Sans" font-size="11" font-weight="bold" font-style="italic" fill="#ff1010">X</text>
<line x1="726.4" y1="803" x2="718.3" y2="818.5" stroke="#2020ff" stroke-width="1.3"/>
<path d="M713.8 818.3 L720 821.5 L713.2 827.5 Z" fill="#0000d8"/>
<text x="719" y="817" font-family="Liberation Sans" font-size="10.5" font-weight="bold" font-style="italic" fill="#1a1aff">Z</text>
</g>
</svg><!--/VIEW-->
<!--PROPS--><div class="a" style="left:1324px;top:56px;width:212px;height:830px;background:#fcf9f6"></div>
<div class="a" style="left:1324px;top:886px;width:212px;height:1px;background:#b4b0ac"></div>
<svg class="a" style="left:1324px;top:56px" width="212" height="630" viewBox="1324 56 212 630">
<path d="M1337.5 68.3l4 3.5-4 3.5" fill="none" stroke="#000" stroke-width="1.6"/>
<path d="M1517.5 103.3h10l-5-5.5z" fill="#3a3a3a"/>
<path d="M1517.5 340.3h10l-5-5.5z" fill="#3a3a3a"/>
<path d="M1517.5 457.3h10l-5-5.5z" fill="#3a3a3a"/>
<path d="M1517.5 574.3h10l-5-5.5z" fill="#3a3a3a"/>
<g fill="none" stroke="#000" stroke-width="1.2"><path d="M1335.5 97.5l5-2.5 6 1.5 0.5 6.5-5 3-6.5-2.5z M1340.5 95l1.5 6 5-5 M1342 101l-6.5-2.5 M1342 101l0 5"/></g>
<rect x="1334.5" y="330.5" width="13" height="13" rx="2" fill="#111"/>
<rect x="1336.3" y="332.3" width="2" height="2" fill="#fcf9f6"/>
<rect x="1336.3" y="335.9" width="2" height="2" fill="#fcf9f6"/>
<rect x="1336.3" y="339.5" width="2" height="2" fill="#fcf9f6"/>
<rect x="1339.9" y="332.3" width="2" height="2" fill="#fcf9f6"/>
<rect x="1339.9" y="335.9" width="2" height="2" fill="#fcf9f6"/>
<rect x="1339.9" y="339.5" width="2" height="2" fill="#fcf9f6"/>
<rect x="1343.5" y="332.3" width="2" height="2" fill="#fcf9f6"/>
<rect x="1343.5" y="335.9" width="2" height="2" fill="#fcf9f6"/>
<rect x="1343.5" y="339.5" width="2" height="2" fill="#fcf9f6"/>
<rect x="1329.5" y="443.5" width="23" height="22" rx="3" fill="#dcd9d6" stroke="#b4b0ac"/>
<rect x="1335.5" y="448.5" width="11" height="11" fill="#fff" stroke="#111" stroke-width="1.6"/>
<g fill="#333"><rect x="1340.5" y="450.8" width="1" height="1.2"/><rect x="1340.5" y="456" width="1" height="1.2"/><rect x="1337.8" y="453.5" width="1.2" height="1"/><rect x="1343" y="453.5" width="1.2" height="1"/><rect x="1340.3" y="453.3" width="1.4" height="1.4"/></g>
<g fill="none" stroke="#000" stroke-width="1.3"><path d="M1335 567.5h10v10h-10z M1335 567.5l2.5-2.5h10v10l-2.5 2.5 M1347.5 565v0"/><path d="M1337.5 565v10h10 M1335 577.5l2.5-2.5" stroke-width="0.8"/></g>
<rect x="1329.5" y="649.5" width="23" height="22" rx="3" fill="#dcd9d6" stroke="#b4b0ac"/>
<path d="M1336.5 653.5v10.5h10 M1336.5 664l-4 3.5" fill="none" stroke="#111" stroke-width="1.4"/>
</svg>
<div class="t" style="left:1358px;top:93px;font-weight:bold">Geometry</div>
<div class="t" style="left:1358px;top:121px;">Color</div>
<div class="a" style="left:1410px;top:117px;width:24px;height:23px;border:1px solid #a9a9a9;border-radius:3px;background:linear-gradient(#f6f6f6,#dcdcdc)"></div>
<div class="t" style="left:1358px;top:149px;">Style</div>
<div class="cmb" style="left:1410px;top:145px;width:124px;height:23px"><span style="left:4px;top:3px">edges</span><i style="top:8px;right:7px"></i></div>
<div class="t" style="left:1358px;top:177px;">Opacity</div>
<div class="inp" style="left:1410px;top:174px;width:124px;height:21px;border-color:#aaa6a2"><span style="left:4px;top:2px">1.00</span><div class="a" style="right:0;top:0;width:14px;height:19px;border-left:1px solid #c8c5c2;background:linear-gradient(#faf9f8,#ebe8e5);border-radius:0 2px 2px 0"></div><div class="a" style="right:3px;top:2px;width:0;height:0;border-left:4px solid transparent;border-right:4px solid transparent;border-bottom:4px solid #a8a8a8"></div><div class="a" style="right:3px;top:11px;width:0;height:0;border-left:4px solid transparent;border-right:4px solid transparent;border-top:4px solid #3a3a3a"></div></div>
<div class="a" style="left:1358px;top:204px;width:14px;height:14px;border:1px solid #aaa7a4;border-radius:2px;background:#fff"></div>
<div class="t" style="left:1377px;top:204px;">Show Normals</div>
<div class="t" style="left:1300px;width:105px;text-align:right;top:231px;color:#b8b8b8">Scale</div>
<div class="inp" style="left:1410px;top:227px;width:124px;height:23px;background:#ebe8e5;border-color:#b8b5b2"><span style="left:4px;top:3px;color:#b8b8b8">0.05</span></div>
<div class="t" style="left:1300px;width:105px;text-align:right;top:259px;color:#b8b8b8">Color</div>
<div class="a" style="left:1410px;top:255px;width:24px;height:23px;border:1px solid #2323d8;border-radius:3px;background:linear-gradient(#7878ff,#4848f0)"></div>
<div class="t" style="left:1300px;width:105px;text-align:right;top:287px;color:#b8b8b8">Count</div>
<div class="inp" style="left:1410px;top:283px;width:124px;height:23px;background:#ebe8e5;border-color:#b8b5b2"><span style="left:4px;top:3px;color:#b8b8b8">100000</span></div>
<div class="t" style="left:1358px;top:330px;font-weight:bold">Background Mesh</div>
<div class="t" style="left:1358px;top:358px;">Color</div>
<div class="a" style="left:1410px;top:354px;width:24px;height:23px;border:1px solid #5a9ad6;border-radius:3px;background:linear-gradient(#bcdcfc,#98c6f4)"></div>
<div class="t" style="left:1358px;top:386px;">Style</div>
<div class="cmb" style="left:1410px;top:382px;width:124px;height:23px"><span style="left:4px;top:3px">wire</span><i style="top:8px;right:7px"></i></div>
<div class="t" style="left:1358px;top:414px;">Opacity</div>
<div class="inp" style="left:1410px;top:411px;width:124px;height:21px;border-color:#aaa6a2"><span style="left:4px;top:2px">1.00</span><div class="a" style="right:0;top:0;width:14px;height:19px;border-left:1px solid #c8c5c2;background:linear-gradient(#faf9f8,#ebe8e5);border-radius:0 2px 2px 0"></div><div class="a" style="right:3px;top:2px;width:0;height:0;border-left:4px solid transparent;border-right:4px solid transparent;border-bottom:4px solid #a8a8a8"></div><div class="a" style="right:3px;top:11px;width:0;height:0;border-left:4px solid transparent;border-right:4px solid transparent;border-top:4px solid #3a3a3a"></div></div>
<div class="t" style="left:1358px;top:447px;font-weight:bold">Boundary Mesh</div>
<div class="t" style="left:1358px;top:475px;">Color by</div>
<div class="cmb" style="left:1413px;top:471px;width:121px;height:23px"><span style="left:4px;top:3px">bc_id</span><i style="top:8px;right:7px"></i></div>
<div class="t" style="left:1358px;top:503px;">Style</div>
<div class="cmb" style="left:1413px;top:499px;width:121px;height:23px"><span style="left:4px;top:3px">edges</span><i style="top:8px;right:7px"></i></div>
<div class="t" style="left:1358px;top:531px;">Opacity</div>
<div class="inp" style="left:1413px;top:528px;width:121px;height:21px;border-color:#aaa6a2"><span style="left:4px;top:2px">1.00</span><div class="a" style="right:0;top:0;width:14px;height:19px;border-left:1px solid #c8c5c2;background:linear-gradient(#faf9f8,#ebe8e5);border-radius:0 2px 2px 0"></div><div class="a" style="right:3px;top:2px;width:0;height:0;border-left:4px solid transparent;border-right:4px solid transparent;border-bottom:4px solid #a8a8a8"></div><div class="a" style="right:3px;top:11px;width:0;height:0;border-left:4px solid transparent;border-right:4px solid transparent;border-top:4px solid #3a3a3a"></div></div>
<div class="t" style="left:1358px;top:564px;font-weight:bold">Regions</div>
<div class="t" style="left:1358px;top:592px;">Style</div>
<div class="cmb" style="left:1410px;top:589px;width:124px;height:22px"><span style="left:4px;top:2px">solid</span><i style="top:8px;right:7px"></i></div>
<div class="t" style="left:1358px;top:620px;">Opacity</div>
<div class="inp" style="left:1410px;top:617px;width:124px;height:21px;border-color:#aaa6a2"><span style="left:4px;top:2px">0.50</span><div class="a" style="right:0;top:0;width:14px;height:19px;border-left:1px solid #c8c5c2;background:linear-gradient(#faf9f8,#ebe8e5);border-radius:0 2px 2px 0"></div><div class="a" style="right:3px;top:2px;width:0;height:0;border-left:4px solid transparent;border-right:4px solid transparent;border-bottom:4px solid #a8a8a8"></div><div class="a" style="right:3px;top:11px;width:0;height:0;border-left:4px solid transparent;border-right:4px solid transparent;border-top:4px solid #3a3a3a"></div></div>
<div class="t" style="left:1358px;top:653px;font-weight:bold">Axes</div><!--/PROPS-->
<!--CONSOLE--><div class="a" style="left:659px;top:887px;width:877px;height:5px;background:#dfdfdf"></div>
<div class="a" style="left:659px;top:886px;width:877px;height:1px;background:#b0adaa"></div>
<div class="a" style="left:1091px;top:889px;width:1px;height:1px;background:#8a8a8a;box-shadow:0.5px 1px 0 #fafafa"></div>
<div class="a" style="left:656px;top:551px;width:1px;height:1px;background:#8a8a8a;box-shadow:0.5px 1px 0 #fafafa"></div>
<div class="a" style="left:1094px;top:889px;width:1px;height:1px;background:#8a8a8a;box-shadow:0.5px 1px 0 #fafafa"></div>
<div class="a" style="left:656px;top:554px;width:1px;height:1px;background:#8a8a8a;box-shadow:0.5px 1px 0 #fafafa"></div>
<div class="a" style="left:1097px;top:889px;width:1px;height:1px;background:#8a8a8a;box-shadow:0.5px 1px 0 #fafafa"></div>
<div class="a" style="left:656px;top:557px;width:1px;height:1px;background:#8a8a8a;box-shadow:0.5px 1px 0 #fafafa"></div>
<div class="a" style="left:1100px;top:889px;width:1px;height:1px;background:#8a8a8a;box-shadow:0.5px 1px 0 #fafafa"></div>
<div class="a" style="left:656px;top:560px;width:1px;height:1px;background:#8a8a8a;box-shadow:0.5px 1px 0 #fafafa"></div>
<div class="a" style="left:1103px;top:889px;width:1px;height:1px;background:#8a8a8a;box-shadow:0.5px 1px 0 #fafafa"></div>
<div class="a" style="left:656px;top:563px;width:1px;height:1px;background:#8a8a8a;box-shadow:0.5px 1px 0 #fafafa"></div>
<div class="a" style="left:1106px;top:889px;width:1px;height:1px;background:#8a8a8a;box-shadow:0.5px 1px 0 #fafafa"></div>
<div class="a" style="left:656px;top:566px;width:1px;height:1px;background:#8a8a8a;box-shadow:0.5px 1px 0 #fafafa"></div>
<div class="a" style="left:658px;top:892px;width:878px;height:199px;background:#fff;border:1px solid #a9a6a3;border-right:none"></div>
<div class="a" style="left:1522px;top:893px;width:14px;height:197px;background:#e4e2df;border-left:1px solid #c9c6c3"></div>
<div class="a" style="left:1523px;top:893px;width:13px;height:14px;background:#f7f5f3"></div>
<div class="a" style="left:1523px;top:1076px;width:13px;height:14px;background:#f7f5f3"></div>
<div class="a" style="left:1525px;top:897px;width:0;height:0;border-left:4.5px solid transparent;border-right:4.5px solid transparent;border-bottom:4.5px solid #3c3c3c"></div>
<div class="a" style="left:1525px;top:1081px;width:0;height:0;border-left:4.5px solid transparent;border-right:4.5px solid transparent;border-top:4.5px solid #3c3c3c"></div>
<div class="t mono" style="left:663px;top:892px">&nbsp;&nbsp;Setting&nbsp;master&nbsp;from&nbsp;flags...</div>
<div class="t mono" style="left:663px;top:906px">&nbsp;&nbsp;Gather&nbsp;and&nbsp;Write&nbsp;MasterList...</div>
<div class="t mono" style="left:663px;top:920px">&nbsp;&nbsp;Saving&nbsp;Mesh&nbsp;info&nbsp;for&nbsp;Scalar&nbsp;cells...</div>
<div class="t mono" style="left:663px;top:934px">&nbsp;&nbsp;Saving&nbsp;Mesh&nbsp;info&nbsp;for&nbsp;U-MOMENTUM&nbsp;cells...</div>
<div class="t mono" style="left:663px;top:948px">&nbsp;&nbsp;Saving&nbsp;Mesh&nbsp;info&nbsp;for&nbsp;V-MOMENTUM&nbsp;cells...</div>
<div class="t mono" style="left:663px;top:962px">&nbsp;&nbsp;Saving&nbsp;Mesh&nbsp;info&nbsp;for&nbsp;W-MOMENTUM&nbsp;cells...</div>
<div class="t" style="left:663px;top:977px;color:#0000ff">Ready</div>
<div class="t" style="left:663px;top:992px;color:#0000ff">MFiX process has stopped</div>
<div class="t mono" style="left:663px;top:1006px">&nbsp;WROTE&nbsp;BOUNDARY&nbsp;IN&nbsp;VTK&nbsp;FILE&nbsp;:&nbsp;CYCLONE_SMS_boundary.vtk</div>
<div class="t mono" style="left:663px;top:1020px">============================================================================</div>
<div class="t mono" style="left:663px;top:1034px">&nbsp;PRE_PROCESSING&nbsp;COMPLETE.</div>
<div class="t mono" style="left:663px;top:1048px">============================================================================</div>
<div class="a" style="left:659px;top:1091px;width:877px;height:23px;background:#dfdfdf"></div>
<div class="t" style="left:667px;top:1095px;color:#b4b4b4">0 errors</div>
<div class="t" style="left:735px;top:1095px;color:#b4b4b4">0 warnings</div>
<div class="t" style="left:822px;top:1095px;color:#111">4 messages</div>
<svg class="a" style="left:1455px;top:1092px" width="81" height="20" viewBox="1455 1092 81 20">
<path d="M1462.5 1098l9 8.5M1471.5 1098l-9 8.5" stroke="#111" stroke-width="1.6"/>
<path d="M1496 1097v8.5 M1492.5 1102.5l3.5 3.8 3.5-3.8 M1490.5 1108.2h11" fill="none" stroke="#111" stroke-width="1.6"/>
<path d="M1525 1109v-8.5 M1521.5 1104l3.5-3.8 3.5 3.8 M1519.5 1097.8h11" fill="none" stroke="#111" stroke-width="1.6"/>
</svg>
<div class="a" style="left:1px;top:1114px;width:1535px;height:30px;background:#dfdfdf"></div>
<div class="a" style="left:2px;top:1117px;width:55px;height:23px;background:#b1b1b1;border:1px solid #8c8c8c;border-radius:3px"></div>
<div class="t ns" style="left:6px;top:1121px;font-weight:bold;color:#1e7bf0">Mesher</div>
<div class="t ns" style="left:63px;top:1121px;color:#8c8c8c">Modeler</div>
<div class="t ns" style="left:121px;top:1121px;color:#8c8c8c">Nodeworks</div>
<div class="t ns" style="left:198px;top:1121px;color:#111">Editor</div>
<div class="t ns" style="left:245px;top:1121px;color:#111">Python</div>
<div class="t" style="left:1340px;top:1121px;color:#111">Ready</div>
<div class="a" style="left:1386px;top:1117px;width:1px;height:23px;background:#aaa"></div><div class="a" style="left:1387px;top:1117px;width:1px;height:23px;background:#fafafa"></div>
<div class="t ns" style="left:1394px;top:1121px;color:#111">CPU: &nbsp;0%</div>
<div class="a" style="left:1463px;top:1117px;width:1px;height:23px;background:#aaa"></div><div class="a" style="left:1464px;top:1117px;width:1px;height:23px;background:#fafafa"></div>
<div class="t ns" style="left:1471px;top:1121px;color:#111">RAM: &nbsp;60%</div><!--/CONSOLE-->

</div></body></html>
